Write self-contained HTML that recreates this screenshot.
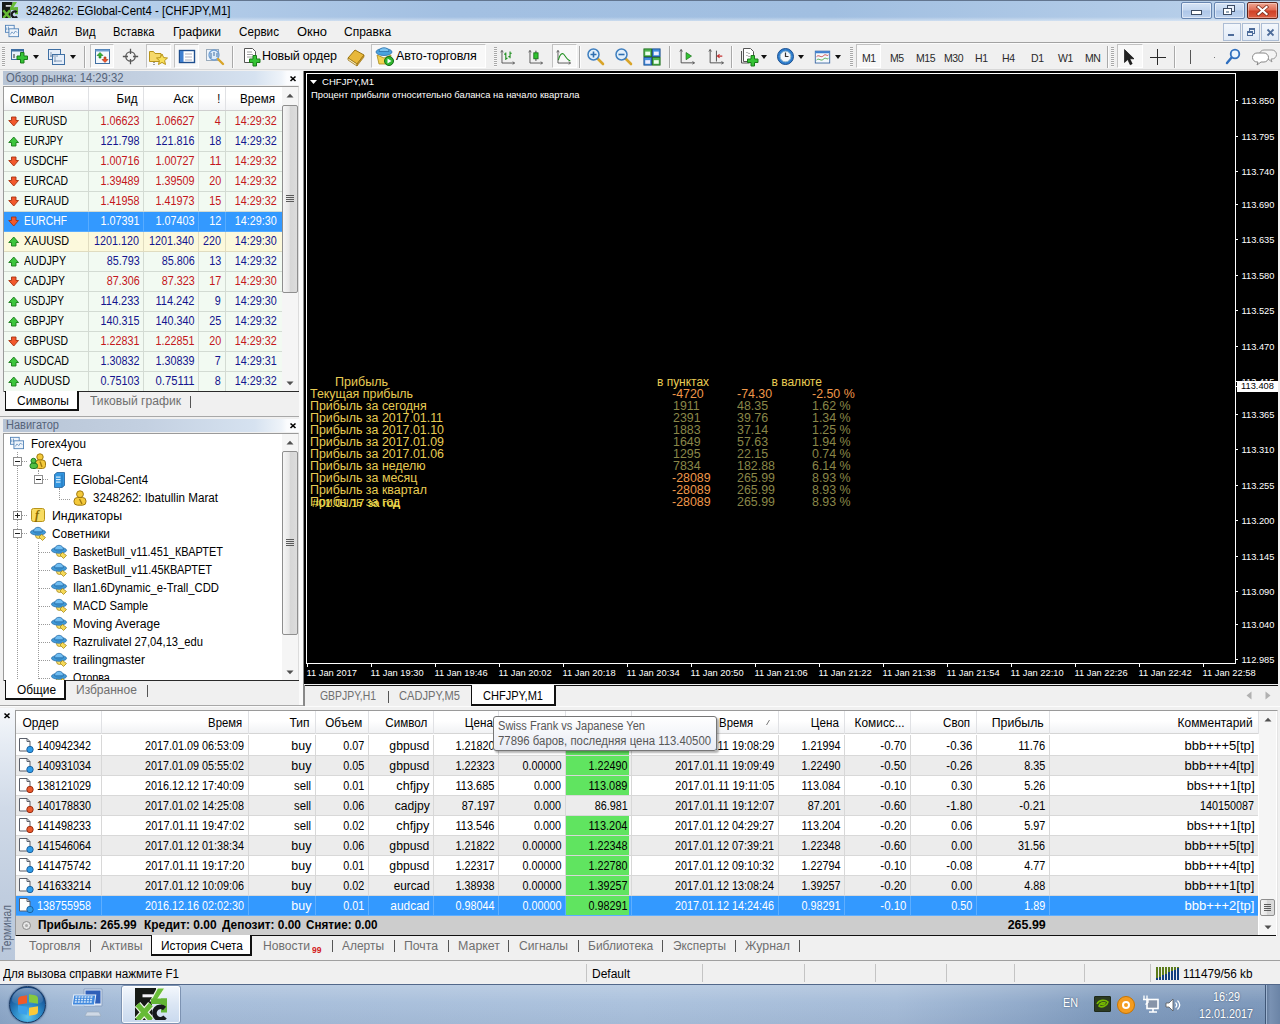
<!DOCTYPE html>
<html><head><meta charset="utf-8"><title>3248262: EGlobal-Cent4 - [CHFJPY,M1]</title>
<style>
*{box-sizing:border-box;margin:0;padding:0}
html,body{width:1280px;height:1024px;overflow:hidden}
body{position:relative;background:#f0f0f0;font-family:"Liberation Sans","DejaVu Sans",sans-serif;font-size:12px;color:#000;line-height:14px}
body *{position:absolute}
.t{white-space:nowrap;display:block}
svg text{position:static}
</style></head><body>

<div style="left:0px;top:0px;width:1280px;height:21px;background:linear-gradient(rgba(255,255,255,0),rgba(255,255,255,0) 80%,rgba(255,255,255,.45)),linear-gradient(90deg,#c6d9ee 0%,#b4cde9 12%,#a3c0e2 35%,#a1bfe1 65%,#b3cce8 90%,#bdd3eb 100%);border-top:1px solid #62758f"></div>
<svg style="left:2px;top:2px" width="16" height="16" viewBox="0 0 32 32"><rect x="0" y="0" width="21" height="16" fill="#161a16"/><rect x="7.500" y="6.300" width="11" height="3" fill="#f4f4f8"/><path d="M22.500 0h7.500L21.500 13h-6z" fill="#6abf3a"/><path d="M16 10.500h16v5.500H16z" fill="#62b535"/><path d="M26 10.500h6v14h-6z" fill="#62b535"/><rect x="0" y="16" width="17" height="16" fill="#161a16"/><path d="M2.500 16.500L16 32M16 16.500L2.500 32" stroke="#66bb36" stroke-width="5"/><path d="M29.500 20.500a6 6.200 0 1 0 .5 8.500" fill="none" stroke="#16181c" stroke-width="4.600"/></svg>
<span class="t" style="left:25.5px;transform-origin:0 50%;top:3.5px;transform:scaleX(0.953);">3248262: EGlobal-Cent4 - [CHFJPY,M1]</span>
<div style="left:1181px;top:2px;width:31px;height:17px;background:linear-gradient(#d6e4f6,#c3d6ef 48%,#adc6e8 52%,#bed2ee);border:1px solid #6785b0;border-radius:2px;box-shadow:inset 0 0 0 1px rgba(255,255,255,.5);"></div>
<div style="left:1191px;top:10px;width:11px;height:5px;background:#fff;border:1px solid #3d4c63"></div>
<div style="left:1214px;top:2px;width:31px;height:17px;background:linear-gradient(#d6e4f6,#c3d6ef 48%,#adc6e8 52%,#bed2ee);border:1px solid #6785b0;border-radius:2px;box-shadow:inset 0 0 0 1px rgba(255,255,255,.5);"></div>
<div style="left:1227px;top:5px;width:8px;height:7px;background:#e8f0fa;border:1px solid #3d4c63"></div>
<div style="left:1223px;top:8px;width:9px;height:7px;background:#fff;border:1px solid #3d4c63"></div>
<div style="left:1226px;top:11px;width:3px;height:2px;background:#9ab;"></div>
<div style="left:1247px;top:2px;width:31px;height:17px;background:linear-gradient(#f0a893,#e06a52 48%,#cf3f26 52%,#dd5e42);border:1px solid #5e241a;border-radius:2px;box-shadow:inset 0 0 0 1px rgba(255,255,255,.35);"></div>
<svg style="left:1256px;top:5px" width="13" height="11" viewBox="0 0 13 11"><path d="M2.500 2l8 7M10.500 2l-8 7" stroke="#7a2a1a" stroke-width="3.600" stroke-linecap="square"/><path d="M2.500 2l8 7M10.500 2l-8 7" stroke="#fff" stroke-width="2.200" stroke-linecap="square"/></svg>
<div style="left:0px;top:21px;width:1280px;height:22px;background:#f0f0f0;"></div>
<div style="left:0px;top:42px;width:1280px;height:1px;background:#a2a2a2;"></div>
<svg style="left:4px;top:24px" width="16" height="14" viewBox="0 0 18 16"><rect x="1.500" y="1.500" width="10" height="8" fill="#eef4fb" stroke="#4d7fb5"/><rect x="5.500" y="5.500" width="11" height="9" fill="#eef4fb" stroke="#4d7fb5"/><path d="M7 12l2-3 2 2 2-3 2 2" fill="none" stroke="#4d7fb5" stroke-width=".8"/><path d="M3 4v3M5 3v4" stroke="#4d7fb5" stroke-width=".8"/></svg>
<span class="t" style="left:28px;transform-origin:0 50%;top:25px;">Файл</span>
<span class="t" style="left:75px;transform-origin:0 50%;top:25px;transform:scaleX(0.944);">Вид</span>
<span class="t" style="left:113px;transform-origin:0 50%;top:25px;transform:scaleX(0.930);">Вставка</span>
<span class="t" style="left:173px;transform-origin:0 50%;top:25px;transform:scaleX(1.006);">Графики</span>
<span class="t" style="left:239px;transform-origin:0 50%;top:25px;transform:scaleX(0.973);">Сервис</span>
<span class="t" style="left:297px;transform-origin:0 50%;top:25px;transform:scaleX(1.076);">Окно</span>
<span class="t" style="left:344px;transform-origin:0 50%;top:25px;">Справка</span>
<div style="left:1223px;top:23px;width:18px;height:18px;background:linear-gradient(#f3f7fc,#e1eaf6);border:1px solid #adbdd4"></div>
<div style="left:1242px;top:23px;width:18px;height:18px;background:linear-gradient(#f3f7fc,#e1eaf6);border:1px solid #adbdd4"></div>
<div style="left:1261px;top:23px;width:18px;height:18px;background:linear-gradient(#f3f7fc,#e1eaf6);border:1px solid #adbdd4"></div>
<div style="left:1228px;top:34px;width:6px;height:2px;background:#4d6c9a;"></div>
<div style="left:1249px;top:28px;width:6px;height:6px;border:1px solid #4d6c9a;border-top-width:2px"></div>
<div style="left:1247px;top:31px;width:6px;height:5px;background:#eaf0f8;border:1px solid #4d6c9a;border-top-width:2px"></div>
<svg style="left:1266px;top:28px" width="9" height="9" viewBox="0 0 9 9"><path d="M1.500 1.500l6 6M7.500 1.500l-6 6" stroke="#4d6c9a" stroke-width="1.800"/></svg>
<div style="left:0px;top:43px;width:1280px;height:27px;background:#f0f0f0;border-top:1px solid #fbfbfb;border-bottom:1px solid #d8d8d8"></div>
<div style="left:0;top:43px;width:1280px;height:27px"><div style="left:2px;top:4px;width:3px;height:20px;background:repeating-linear-gradient(#a8a8a8 0 1px,#f8f8f8 1px 2px)"></div>
<svg style="left:10px;top:3px" width="22" height="20" viewBox="0 0 22 20"><rect x="1.5" y="3.5" width="12" height="10" fill="#eaf2fb" stroke="#3f6fa3"/><rect x="1.5" y="3.5" width="12" height="2" fill="#3f6fa3"/><path d="M4 8v4M3 9h2M3 11h2" stroke="#555" stroke-width=".8" fill="none"/><path d="M10.5 6.5h3.5v3.5h3.5v3.5h-3.5v3.5h-3.5v-3.5h-3.5v-3.5h3.500z" fill="#35c435" stroke="#1a7a1a"/></svg>
<div style="left:33px;top:12px;width:0;height:0;border-left:3px solid transparent;border-right:3px solid transparent;border-top:4px solid #111"></div>
<svg style="left:47px;top:4px" width="20" height="20" viewBox="0 0 20 20"><rect x="1.500" y="2.500" width="12" height="10" fill="#e6eef9" stroke="#3f6fa3"/><rect x="5.500" y="7.500" width="12" height="10" fill="#e6eef9" stroke="#3f6fa3"/><path d="M4 5v5M8 10v5M3 9h8M7 14h8" stroke="#6a86a8" stroke-width=".8" fill="none"/></svg>
<div style="left:70px;top:12px;width:0;height:0;border-left:3px solid transparent;border-right:3px solid transparent;border-top:4px solid #111"></div>
<div style="left:84px;top:3px;width:1px;height:22px;background:#a9a9a9"></div><div style="left:85px;top:3px;width:1px;height:22px;background:#fcfcfc"></div>
<div style="left:90px;top:1px;width:24px;height:24px;background:#f8f8f8;border:1px solid #c2c2c2;border-right-color:#fff;border-bottom-color:#fff"></div>
<svg style="left:94px;top:5px" width="17" height="17" viewBox="0 0 17 17"><rect x="1.500" y="1.500" width="14" height="14" fill="#f4f8fd" stroke="#3f6fa3"/><rect x="1.500" y="1.500" width="14" height="2" fill="#6f9fd3"/><path d="M6 4.500l3 3h-2v2.500h-2v-2.500h-2z" fill="#35b435" stroke="#1a7a1a" stroke-width=".6"/><path d="M11 14.500l3-3h-2v-2.500h-2v2.500h-2z" fill="#f0522a" stroke="#a0300f" stroke-width=".6"/></svg>
<svg style="left:122px;top:5px" width="17" height="17" viewBox="0 0 20 20"><circle cx="10" cy="10" r="5.500" fill="none" stroke="#555" stroke-width="1.500"/><path d="M10 1v6M10 13v6M1 10h6M13 10h6" stroke="#555" stroke-width="1.500"/></svg>
<div style="left:146px;top:1px;width:25px;height:24px;background:#f8f8f8;border:1px solid #c2c2c2;border-right-color:#fff;border-bottom-color:#fff"></div>
<svg style="left:148px;top:4px" width="22" height="20" viewBox="0 0 22 20"><path d="M1.500 4.500h4l1.500 2h6v8h-11.500z" fill="#f6d96b" stroke="#b8941a"/><path d="M14 7l1.700 3.600 3.800.4-2.900 2.600.9 3.900-3.500-2.100-3.500 2.100.9-3.900-2.900-2.600 3.800-.4z" fill="#f8e05a" stroke="#b8941a"/><path d="M6 15v4" stroke="#444" stroke-dasharray="1 1"/></svg>
<div style="left:174px;top:1px;width:25px;height:24px;background:#f8f8f8;border:1px solid #c2c2c2;border-right-color:#fff;border-bottom-color:#fff"></div>
<svg style="left:178px;top:6px" width="18" height="16" viewBox="0 0 18 16"><rect x="1.500" y="1.500" width="15" height="12" fill="#fff" stroke="#1f4f8f" stroke-width="1.400"/><rect x="2" y="2" width="3.500" height="11" fill="#3f7fcf"/><path d="M7 5h7M7 8h7M7 11h7" stroke="#99a" stroke-width=".8"/></svg>
<svg style="left:205px;top:4px" width="20" height="20" viewBox="0 0 20 20"><rect x="1.500" y="2.500" width="12" height="11" fill="#eef4fb" stroke="#9ab"/><circle cx="9" cy="8" r="5" fill="#d6e8f8" fill-opacity=".7" stroke="#6f9fd3" stroke-width="1.300"/><path d="M6 6v5M9 5v4M12 6v4" stroke="#3f6fa3"/><path d="M13 12l5 5" stroke="#d9a52a" stroke-width="2.400" stroke-linecap="round"/></svg>
<div style="left:232px;top:3px;width:1px;height:22px;background:#a9a9a9"></div><div style="left:233px;top:3px;width:1px;height:22px;background:#fcfcfc"></div>
<svg style="left:242px;top:4px" width="20" height="20" viewBox="0 0 20 20"><path d="M2.500 1.500h8l3 3v11h-11z" fill="#fff" stroke="#555"/><path d="M5 5h5M5 7.500h6M5 10h6" stroke="#888" stroke-width=".8"/><path d="M11 8.500h3.500v3.500h3.500v3.500h-3.500v3.500h-3.500v-3.500h-3.500v-3.500h3.500z" fill="#35c435" stroke="#1a7a1a"/></svg>
<span class="t" style="left:262px;top:6px;font-size:12.5px;letter-spacing:-.2px">Новый ордер</span>
<svg style="left:346px;top:4px" width="20" height="20" viewBox="0 0 20 20"><path d="M2 11l7-8 9 5-7 9z" fill="#e8b83a" stroke="#9a7410"/><path d="M2 11l0 2 9 6 0-2z" fill="#fff3c8" stroke="#9a7410" stroke-width=".8"/><path d="M11 17l7-9v2l-7 9z" fill="#c8962a" stroke="#9a7410" stroke-width=".6"/></svg>
<div style="left:371px;top:1px;width:115px;height:24px;background:#f8f8f8;border:1px solid #c2c2c2;border-right-color:#fff;border-bottom-color:#fff"></div>
<svg style="left:375px;top:3px" width="20" height="21" viewBox="0 0 20 21"><ellipse cx="9" cy="6" rx="8" ry="3.500" fill="#4aa3df" stroke="#2a6fa8" stroke-width=".8"/><path d="M4 5.500C4 0.500 14 0.500 14 5.500Z" fill="#7cc4f2" stroke="#2a6fa8" stroke-width=".8"/><path d="M2 9l7 3 7-3-2 9h-10z" fill="#f2d250" stroke="#a88a1a" stroke-width=".8"/><circle cx="14" cy="15" r="4.500" fill="#2fb52f" stroke="#176f17"/><path d="M12.500 12.500v5l4-2.500z" fill="#fff"/></svg>
<span class="t" style="left:396px;top:6px;font-size:12.5px;letter-spacing:-.15px">Авто-торговля</span>
<div style="left:494px;top:4px;width:3px;height:20px;background:repeating-linear-gradient(#a8a8a8 0 1px,#f8f8f8 1px 2px)"></div>
<svg style="left:499px;top:6px" width="17" height="17" viewBox="0 0 20 20"><path d="M3.500 2v14.500H18" stroke="#444" fill="none"/><path d="M2 4l1.500-2.500L5 4M16 15l2.500 1.500L16 18" stroke="#444" fill="none" stroke-width=".8"/><path d="M8 4v9M6 6h2M8 11h2M13 3v8M11 9h2M13 5h2" stroke="#1f8f1f" stroke-width="1.300" fill="none"/></svg>
<svg style="left:527px;top:6px" width="17" height="17" viewBox="0 0 20 20"><path d="M3.500 2v14.500H18" stroke="#444" fill="none"/><path d="M2 4l1.500-2.500L5 4M16 15l2.500 1.500L16 18" stroke="#444" fill="none" stroke-width=".8"/><path d="M10.500 2v12" stroke="#222"/><rect x="8" y="4.500" width="5" height="7" fill="#2fc42f" stroke="#176f17"/></svg>
<div style="left:552px;top:1px;width:25px;height:24px;background:#f8f8f8;border:1px solid #c2c2c2;border-right-color:#fff;border-bottom-color:#fff"></div>
<svg style="left:555px;top:6px" width="17" height="17" viewBox="0 0 20 20"><path d="M3.500 2v14.500H18" stroke="#444" fill="none"/><path d="M2 4l1.500-2.500L5 4M16 15l2.500 1.500L16 18" stroke="#444" fill="none" stroke-width=".8"/><path d="M4 13C6 5 9 4 11 7s4 6 7 7" stroke="#1f8f1f" stroke-width="1.200" fill="none"/></svg>
<div style="left:579px;top:3px;width:1px;height:22px;background:#a9a9a9"></div><div style="left:580px;top:3px;width:1px;height:22px;background:#fcfcfc"></div>
<svg style="left:586px;top:4px" width="20" height="20" viewBox="0 0 20 20"><path d="M11 11l6 6" stroke="#d9a52a" stroke-width="2.600" stroke-linecap="round"/><circle cx="7.500" cy="7.500" r="5.500" fill="#e2f0fb" stroke="#3f7fbf" stroke-width="1.500"/><path d="M4.500 7.500h6M7.500 4.500v6" stroke="#2f6faf" stroke-width="1.600"/></svg>
<svg style="left:614px;top:4px" width="20" height="20" viewBox="0 0 20 20"><path d="M11 11l6 6" stroke="#d9a52a" stroke-width="2.600" stroke-linecap="round"/><circle cx="7.500" cy="7.500" r="5.500" fill="#e2f0fb" stroke="#3f7fbf" stroke-width="1.500"/><path d="M4.500 7.500h6" stroke="#2f6faf" stroke-width="1.600"/></svg>
<svg style="left:643px;top:5px" width="18" height="18" viewBox="0 0 20 20"><rect x="1" y="1" width="8.5" height="8.5" fill="#4fb34f" stroke="#1f6f1f"/><rect x="10.5" y="1" width="8.5" height="8.5" fill="#3f8fdf" stroke="#1f4f8f"/><rect x="1" y="10.5" width="8.5" height="8.5" fill="#3f8fdf" stroke="#1f4f8f"/><rect x="10.5" y="10.5" width="8.5" height="8.5" fill="#4fb34f" stroke="#1f6f1f"/><rect x="2.5" y="4" width="5.5" height="4" fill="#efe"/><rect x="12" y="4" width="5.5" height="4" fill="#eef"/><rect x="2.5" y="13.5" width="5.5" height="4" fill="#eef"/><rect x="12" y="13.5" width="5.5" height="4" fill="#efe"/></svg>
<div style="left:669px;top:3px;width:1px;height:22px;background:#a9a9a9"></div><div style="left:670px;top:3px;width:1px;height:22px;background:#fcfcfc"></div>
<svg style="left:678px;top:5px" width="18" height="18" viewBox="0 0 20 20"><path d="M3.500 2v14.500H18" stroke="#444" fill="none"/><path d="M2 4l1.500-2.500L5 4M16 15l2.500 1.500L16 18" stroke="#444" fill="none" stroke-width=".8"/><path d="M9 5v8l6-4z" fill="#2fc42f" stroke="#176f17" stroke-width=".8"/></svg>
<svg style="left:707px;top:5px" width="18" height="18" viewBox="0 0 20 20"><path d="M3.500 2v14.500H18" stroke="#444" fill="none"/><path d="M2 4l1.500-2.500L5 4M16 15l2.500 1.500L16 18" stroke="#444" fill="none" stroke-width=".8"/><path d="M10.500 3v12" stroke="#444"/><path d="M17 9h-5M14 7l-2.500 2 2.500 2" stroke="#c42f2f" fill="none" stroke-width="1.200"/></svg>
<div style="left:731px;top:3px;width:1px;height:22px;background:#a9a9a9"></div><div style="left:732px;top:3px;width:1px;height:22px;background:#fcfcfc"></div>
<svg style="left:739px;top:3px" width="22" height="22" viewBox="0 0 22 22"><path d="M4.500 2.500h7l3 3v10h-10z" fill="#fff" stroke="#555"/><path d="M2.500 5v12h8" fill="none" stroke="#555"/><path d="M7 7c1.500-2 2.500 2 4 0M7 10c1.500-2 2.500 2 4 0" stroke="#888" fill="none" stroke-width=".8"/><path d="M12 9.500h3.500v3.500h3.500v3.500h-3.500v3.500h-3.500v-3.500h-3.500v-3.500h3.500z" fill="#35c435" stroke="#1a7a1a"/></svg>
<div style="left:761px;top:12px;width:0;height:0;border-left:3px solid transparent;border-right:3px solid transparent;border-top:4px solid #111"></div>
<svg style="left:776px;top:4px" width="20" height="20" viewBox="0 0 20 20"><circle cx="9.500" cy="9.500" r="8" fill="#2f7fd0" stroke="#1a4f8f"/><circle cx="9.500" cy="9.500" r="5.300" fill="#f4f8fc" stroke="#9bc"/><path d="M9.500 5.500v4h3" stroke="#333" fill="none" stroke-width="1.200"/></svg>
<div style="left:798px;top:12px;width:0;height:0;border-left:3px solid transparent;border-right:3px solid transparent;border-top:4px solid #111"></div>
<svg style="left:814px;top:6px" width="17" height="17" viewBox="0 0 20 20"><rect x="1.500" y="2.500" width="17" height="14" fill="#f4f8fd" stroke="#2f5f9f"/><rect x="1.500" y="2.500" width="17" height="2.500" fill="#3f7fcf"/><path d="M3 9c3-3 5 2 8-1s4 1 6-1" stroke="#c42f2f" fill="none"/><path d="M3 13c3-3 5 2 8-1s4 1 6-1" stroke="#2f9f2f" fill="none"/></svg>
<div style="left:835px;top:12px;width:0;height:0;border-left:3px solid transparent;border-right:3px solid transparent;border-top:4px solid #111"></div>
<div style="left:850px;top:4px;width:3px;height:20px;background:repeating-linear-gradient(#a8a8a8 0 1px,#f8f8f8 1px 2px)"></div>
<div style="left:856px;top:1px;width:25px;height:24px;background:#f8f8f8;border:1px solid #c2c2c2;border-right-color:#fff;border-bottom-color:#fff"></div>
<span class="t" style="left:862px;top:7.5px;font-size:10.5px;color:#2a2a2a;letter-spacing:-.45px">M1</span>
<span class="t" style="left:890px;top:7.5px;font-size:10.5px;color:#2a2a2a;letter-spacing:-.45px">M5</span>
<span class="t" style="left:916px;top:7.5px;font-size:10.5px;color:#2a2a2a;letter-spacing:-.45px">M15</span>
<span class="t" style="left:944px;top:7.5px;font-size:10.5px;color:#2a2a2a;letter-spacing:-.45px">M30</span>
<span class="t" style="left:975px;top:7.5px;font-size:10.5px;color:#2a2a2a;letter-spacing:-.45px">H1</span>
<span class="t" style="left:1002px;top:7.5px;font-size:10.5px;color:#2a2a2a;letter-spacing:-.45px">H4</span>
<span class="t" style="left:1031px;top:7.5px;font-size:10.5px;color:#2a2a2a;letter-spacing:-.45px">D1</span>
<span class="t" style="left:1058px;top:7.5px;font-size:10.5px;color:#2a2a2a;letter-spacing:-.45px">W1</span>
<span class="t" style="left:1085px;top:7.5px;font-size:10.5px;color:#2a2a2a;letter-spacing:-.45px">MN</span>
<div style="left:1107px;top:3px;width:1px;height:22px;background:#a9a9a9"></div><div style="left:1108px;top:3px;width:1px;height:22px;background:#fcfcfc"></div>
<div style="left:1111px;top:4px;width:3px;height:20px;background:repeating-linear-gradient(#a8a8a8 0 1px,#f8f8f8 1px 2px)"></div>
<div style="left:1117px;top:1px;width:26px;height:24px;background:#f8f8f8;border:1px solid #c2c2c2;border-right-color:#fff;border-bottom-color:#fff"></div>
<svg style="left:1122px;top:5px" width="14" height="18" viewBox="0 0 14 18"><path d="M2.500 1.500v13l3.300-3 2.400 5.300 2-1-2.400-5h4.200z" fill="#222" stroke="#000" stroke-width=".6"/></svg>
<svg style="left:1149px;top:5px" width="18" height="18" viewBox="0 0 18 18"><path d="M8.5 1v16M1 9.5h16" stroke="#2a2a2a" stroke-width="1"/></svg>
<div style="left:1174px;top:3px;width:1px;height:22px;background:#a9a9a9"></div><div style="left:1175px;top:3px;width:1px;height:22px;background:#fcfcfc"></div>
<div style="left:1190px;top:7px;width:1px;height:14px;background:#555"></div>
<div style="left:1214px;top:14px;width:1px;height:1px;background:#777"></div>
<svg style="left:1224px;top:4px" width="18" height="20" viewBox="0 0 18 20"><path d="M3 16l5-6" stroke="#2f6fbf" stroke-width="2.400" stroke-linecap="round"/><circle cx="11" cy="7" r="4.300" fill="#eaf4fd" stroke="#2f6fbf" stroke-width="1.800"/></svg>
<svg style="left:1252px;top:5px" width="26" height="20" viewBox="0 0 26 20"><path d="M12 2h8a4 4 0 0 1 0 9h-1l1 3-4-3h-4a4 4 0 0 1 0-9z" fill="#f4f4f4" stroke="#999"/><path d="M5 5h7a4 4 0 0 1 0 9h-3l-4 3 1-3h-1a4 4 0 0 1 0-9z" fill="#fff" stroke="#888"/></svg></div>
<div style="left:3px;top:71px;width:296px;height:14px;background:linear-gradient(90deg,#b7c4d5,#c3d0e1 48%,#d6e2f0 85%,#eef3f9 94%,#fbfcfe 96%);"></div>
<span class="t" style="left:6px;transform-origin:0 50%;top:71px;color:#56647a;transform:scaleX(0.936);">Обзор рынка: 14:29:32</span>
<svg style="left:289px;top:75px" width="8" height="8" viewBox="0 0 8 8"><path d="M1.500 1.500l5 4.500M6.500 1.500l-5 4.500" stroke="#000" stroke-width="1.600"/></svg>
<div style="left:3px;top:86px;width:296px;height:306px;background:#fff;border:1px solid #9a9a9a;border-bottom:none;border-right-color:#dcdcdc"></div>
<div style="left:4px;top:87px;width:278px;height:24px;background:linear-gradient(#fff,#fff 45%,#f3f4f6);border-bottom:1px solid #cfcfcf"></div>
<div style="left:88px;top:87px;width:1px;height:23px;background:#e0e1e4;"></div>
<div style="left:143px;top:87px;width:1px;height:23px;background:#e0e1e4;"></div>
<div style="left:198px;top:87px;width:1px;height:23px;background:#e0e1e4;"></div>
<div style="left:225px;top:87px;width:1px;height:23px;background:#e0e1e4;"></div>
<span class="t" style="left:10px;transform-origin:0 50%;top:92px;transform:scaleX(1.017);">Символ</span>
<span class="t" style="right:1142px;transform-origin:100% 50%;top:92px;transform:scaleX(0.973);">Бид</span>
<span class="t" style="right:1087px;transform-origin:100% 50%;top:92px;transform:scaleX(1.039);">Аск</span>
<span class="t" style="right:1060px;transform-origin:100% 50%;top:92px;transform:scaleX(0.900);">!</span>
<span class="t" style="right:1005px;transform-origin:100% 50%;top:92px;transform:scaleX(0.970);">Время</span>
<div style="left:4px;top:111px;width:278px;height:21px;background:#f2faf2;border-bottom:1px solid #d3dbd3"></div>
<div style="left:88px;top:111px;width:1px;height:21px;background:#d3dbd3;"></div>
<div style="left:143px;top:111px;width:1px;height:21px;background:#d3dbd3;"></div>
<div style="left:198px;top:111px;width:1px;height:21px;background:#d3dbd3;"></div>
<div style="left:225px;top:111px;width:1px;height:21px;background:#d3dbd3;"></div>
<svg style="left:8px;top:115.5px" width="12" height="11" viewBox="0 0 12 11"><path d="M3.500 1h4.500v3.500h2.500L5.750 10 .750 4.500H3.500z" fill="#f2582c" stroke="#a83210" stroke-width=".9"/></svg>
<span class="t" style="left:24px;transform-origin:0 50%;top:113.5px;color:#000;transform:scaleX(0.849);">EURUSD</span>
<span class="t" style="right:1140.5px;transform-origin:100% 50%;top:113.5px;color:#c4161c;transform:scaleX(0.899);">1.06623</span>
<span class="t" style="right:1085.5px;transform-origin:100% 50%;top:113.5px;color:#c4161c;transform:scaleX(0.899);">1.06627</span>
<span class="t" style="right:1059px;transform-origin:100% 50%;top:113.5px;color:#c4161c;transform:scaleX(0.899);">4</span>
<span class="t" style="right:1003px;transform-origin:100% 50%;top:113.5px;color:#c4161c;transform:scaleX(0.899);">14:29:32</span>
<div style="left:4px;top:132px;width:278px;height:20px;background:#f2faf2;border-bottom:1px solid #d3dbd3"></div>
<div style="left:88px;top:132px;width:1px;height:20px;background:#d3dbd3;"></div>
<div style="left:143px;top:132px;width:1px;height:20px;background:#d3dbd3;"></div>
<div style="left:198px;top:132px;width:1px;height:20px;background:#d3dbd3;"></div>
<div style="left:225px;top:132px;width:1px;height:20px;background:#d3dbd3;"></div>
<svg style="left:8px;top:135.5px" width="12" height="11" viewBox="0 0 12 11"><path d="M3.500 10h4.500v-3.500h2.500L5.750 1 .750 6.500H3.500z" fill="#3dc63d" stroke="#1a7a1a" stroke-width=".9"/></svg>
<span class="t" style="left:24px;transform-origin:0 50%;top:133.5px;color:#000;transform:scaleX(0.824);">EURJPY</span>
<span class="t" style="right:1140.5px;transform-origin:100% 50%;top:133.5px;color:#14148e;transform:scaleX(0.899);">121.798</span>
<span class="t" style="right:1085.5px;transform-origin:100% 50%;top:133.5px;color:#14148e;transform:scaleX(0.899);">121.816</span>
<span class="t" style="right:1059px;transform-origin:100% 50%;top:133.5px;color:#14148e;transform:scaleX(0.899);">18</span>
<span class="t" style="right:1003px;transform-origin:100% 50%;top:133.5px;color:#14148e;transform:scaleX(0.899);">14:29:32</span>
<div style="left:4px;top:152px;width:278px;height:20px;background:#f2faf2;border-bottom:1px solid #d3dbd3"></div>
<div style="left:88px;top:152px;width:1px;height:20px;background:#d3dbd3;"></div>
<div style="left:143px;top:152px;width:1px;height:20px;background:#d3dbd3;"></div>
<div style="left:198px;top:152px;width:1px;height:20px;background:#d3dbd3;"></div>
<div style="left:225px;top:152px;width:1px;height:20px;background:#d3dbd3;"></div>
<svg style="left:8px;top:155.5px" width="12" height="11" viewBox="0 0 12 11"><path d="M3.500 1h4.500v3.500h2.500L5.750 10 .750 4.500H3.500z" fill="#f2582c" stroke="#a83210" stroke-width=".9"/></svg>
<span class="t" style="left:24px;transform-origin:0 50%;top:153.5px;color:#000;transform:scaleX(0.880);">USDCHF</span>
<span class="t" style="right:1140.5px;transform-origin:100% 50%;top:153.5px;color:#c4161c;transform:scaleX(0.899);">1.00716</span>
<span class="t" style="right:1085.5px;transform-origin:100% 50%;top:153.5px;color:#c4161c;transform:scaleX(0.899);">1.00727</span>
<span class="t" style="right:1059px;transform-origin:100% 50%;top:153.5px;color:#c4161c;transform:scaleX(0.963);">11</span>
<span class="t" style="right:1003px;transform-origin:100% 50%;top:153.5px;color:#c4161c;transform:scaleX(0.899);">14:29:32</span>
<div style="left:4px;top:172px;width:278px;height:20px;background:#f2faf2;border-bottom:1px solid #d3dbd3"></div>
<div style="left:88px;top:172px;width:1px;height:20px;background:#d3dbd3;"></div>
<div style="left:143px;top:172px;width:1px;height:20px;background:#d3dbd3;"></div>
<div style="left:198px;top:172px;width:1px;height:20px;background:#d3dbd3;"></div>
<div style="left:225px;top:172px;width:1px;height:20px;background:#d3dbd3;"></div>
<svg style="left:8px;top:175.5px" width="12" height="11" viewBox="0 0 12 11"><path d="M3.500 1h4.500v3.500h2.500L5.750 10 .750 4.500H3.500z" fill="#f2582c" stroke="#a83210" stroke-width=".9"/></svg>
<span class="t" style="left:24px;transform-origin:0 50%;top:173.5px;color:#000;transform:scaleX(0.868);">EURCAD</span>
<span class="t" style="right:1140.5px;transform-origin:100% 50%;top:173.5px;color:#c4161c;transform:scaleX(0.899);">1.39489</span>
<span class="t" style="right:1085.5px;transform-origin:100% 50%;top:173.5px;color:#c4161c;transform:scaleX(0.899);">1.39509</span>
<span class="t" style="right:1059px;transform-origin:100% 50%;top:173.5px;color:#c4161c;transform:scaleX(0.899);">20</span>
<span class="t" style="right:1003px;transform-origin:100% 50%;top:173.5px;color:#c4161c;transform:scaleX(0.899);">14:29:32</span>
<div style="left:4px;top:192px;width:278px;height:20px;background:#f2faf2;border-bottom:1px solid #d3dbd3"></div>
<div style="left:88px;top:192px;width:1px;height:20px;background:#d3dbd3;"></div>
<div style="left:143px;top:192px;width:1px;height:20px;background:#d3dbd3;"></div>
<div style="left:198px;top:192px;width:1px;height:20px;background:#d3dbd3;"></div>
<div style="left:225px;top:192px;width:1px;height:20px;background:#d3dbd3;"></div>
<svg style="left:8px;top:195.5px" width="12" height="11" viewBox="0 0 12 11"><path d="M3.500 1h4.500v3.500h2.500L5.750 10 .750 4.500H3.500z" fill="#f2582c" stroke="#a83210" stroke-width=".9"/></svg>
<span class="t" style="left:24px;transform-origin:0 50%;top:193.5px;color:#000;transform:scaleX(0.888);">EURAUD</span>
<span class="t" style="right:1140.5px;transform-origin:100% 50%;top:193.5px;color:#c4161c;transform:scaleX(0.899);">1.41958</span>
<span class="t" style="right:1085.5px;transform-origin:100% 50%;top:193.5px;color:#c4161c;transform:scaleX(0.899);">1.41973</span>
<span class="t" style="right:1059px;transform-origin:100% 50%;top:193.5px;color:#c4161c;transform:scaleX(0.899);">15</span>
<span class="t" style="right:1003px;transform-origin:100% 50%;top:193.5px;color:#c4161c;transform:scaleX(0.899);">14:29:32</span>
<div style="left:4px;top:212px;width:278px;height:20px;background:#3399ff;border-bottom:1px solid #58acff"></div>
<div style="left:88px;top:212px;width:1px;height:20px;background:#58acff;"></div>
<div style="left:143px;top:212px;width:1px;height:20px;background:#58acff;"></div>
<div style="left:198px;top:212px;width:1px;height:20px;background:#58acff;"></div>
<div style="left:225px;top:212px;width:1px;height:20px;background:#58acff;"></div>
<svg style="left:8px;top:215.5px" width="12" height="11" viewBox="0 0 12 11"><path d="M3.500 1h4.500v3.500h2.500L5.750 10 .750 4.500H3.500z" fill="#f2582c" stroke="#a83210" stroke-width=".9"/></svg>
<span class="t" style="left:24px;transform-origin:0 50%;top:213.5px;color:#fff;transform:scaleX(0.860);">EURCHF</span>
<span class="t" style="right:1140.5px;transform-origin:100% 50%;top:213.5px;color:#fff;transform:scaleX(0.899);">1.07391</span>
<span class="t" style="right:1085.5px;transform-origin:100% 50%;top:213.5px;color:#fff;transform:scaleX(0.899);">1.07403</span>
<span class="t" style="right:1059px;transform-origin:100% 50%;top:213.5px;color:#fff;transform:scaleX(0.899);">12</span>
<span class="t" style="right:1003px;transform-origin:100% 50%;top:213.5px;color:#fff;transform:scaleX(0.899);">14:29:30</span>
<div style="left:4px;top:232px;width:278px;height:20px;background:#fcf9dc;border-bottom:1px solid #e0dcc0"></div>
<div style="left:88px;top:232px;width:1px;height:20px;background:#e0dcc0;"></div>
<div style="left:143px;top:232px;width:1px;height:20px;background:#e0dcc0;"></div>
<div style="left:198px;top:232px;width:1px;height:20px;background:#e0dcc0;"></div>
<div style="left:225px;top:232px;width:1px;height:20px;background:#e0dcc0;"></div>
<svg style="left:8px;top:235.5px" width="12" height="11" viewBox="0 0 12 11"><path d="M3.500 10h4.500v-3.500h2.500L5.750 1 .750 6.500H3.500z" fill="#3dc63d" stroke="#1a7a1a" stroke-width=".9"/></svg>
<span class="t" style="left:24px;transform-origin:0 50%;top:233.5px;color:#000;transform:scaleX(0.900);">XAUUSD</span>
<span class="t" style="right:1140.5px;transform-origin:100% 50%;top:233.5px;color:#14148e;transform:scaleX(0.899);">1201.120</span>
<span class="t" style="right:1085.5px;transform-origin:100% 50%;top:233.5px;color:#14148e;transform:scaleX(0.899);">1201.340</span>
<span class="t" style="right:1059px;transform-origin:100% 50%;top:233.5px;color:#14148e;transform:scaleX(0.899);">220</span>
<span class="t" style="right:1003px;transform-origin:100% 50%;top:233.5px;color:#14148e;transform:scaleX(0.899);">14:29:30</span>
<div style="left:4px;top:252px;width:278px;height:20px;background:#f2faf2;border-bottom:1px solid #d3dbd3"></div>
<div style="left:88px;top:252px;width:1px;height:20px;background:#d3dbd3;"></div>
<div style="left:143px;top:252px;width:1px;height:20px;background:#d3dbd3;"></div>
<div style="left:198px;top:252px;width:1px;height:20px;background:#d3dbd3;"></div>
<div style="left:225px;top:252px;width:1px;height:20px;background:#d3dbd3;"></div>
<svg style="left:8px;top:255.5px" width="12" height="11" viewBox="0 0 12 11"><path d="M3.500 10h4.500v-3.500h2.500L5.750 1 .750 6.500H3.500z" fill="#3dc63d" stroke="#1a7a1a" stroke-width=".9"/></svg>
<span class="t" style="left:24px;transform-origin:0 50%;top:253.5px;color:#000;transform:scaleX(0.887);">AUDJPY</span>
<span class="t" style="right:1140.5px;transform-origin:100% 50%;top:253.5px;color:#14148e;transform:scaleX(0.899);">85.793</span>
<span class="t" style="right:1085.5px;transform-origin:100% 50%;top:253.5px;color:#14148e;transform:scaleX(0.899);">85.806</span>
<span class="t" style="right:1059px;transform-origin:100% 50%;top:253.5px;color:#14148e;transform:scaleX(0.899);">13</span>
<span class="t" style="right:1003px;transform-origin:100% 50%;top:253.5px;color:#14148e;transform:scaleX(0.899);">14:29:32</span>
<div style="left:4px;top:272px;width:278px;height:20px;background:#f2faf2;border-bottom:1px solid #d3dbd3"></div>
<div style="left:88px;top:272px;width:1px;height:20px;background:#d3dbd3;"></div>
<div style="left:143px;top:272px;width:1px;height:20px;background:#d3dbd3;"></div>
<div style="left:198px;top:272px;width:1px;height:20px;background:#d3dbd3;"></div>
<div style="left:225px;top:272px;width:1px;height:20px;background:#d3dbd3;"></div>
<svg style="left:8px;top:275.5px" width="12" height="11" viewBox="0 0 12 11"><path d="M3.500 1h4.500v3.500h2.500L5.750 10 .750 4.500H3.500z" fill="#f2582c" stroke="#a83210" stroke-width=".9"/></svg>
<span class="t" style="left:24px;transform-origin:0 50%;top:273.5px;color:#000;transform:scaleX(0.866);">CADJPY</span>
<span class="t" style="right:1140.5px;transform-origin:100% 50%;top:273.5px;color:#c4161c;transform:scaleX(0.899);">87.306</span>
<span class="t" style="right:1085.5px;transform-origin:100% 50%;top:273.5px;color:#c4161c;transform:scaleX(0.899);">87.323</span>
<span class="t" style="right:1059px;transform-origin:100% 50%;top:273.5px;color:#c4161c;transform:scaleX(0.899);">17</span>
<span class="t" style="right:1003px;transform-origin:100% 50%;top:273.5px;color:#c4161c;transform:scaleX(0.899);">14:29:30</span>
<div style="left:4px;top:292px;width:278px;height:20px;background:#f2faf2;border-bottom:1px solid #d3dbd3"></div>
<div style="left:88px;top:292px;width:1px;height:20px;background:#d3dbd3;"></div>
<div style="left:143px;top:292px;width:1px;height:20px;background:#d3dbd3;"></div>
<div style="left:198px;top:292px;width:1px;height:20px;background:#d3dbd3;"></div>
<div style="left:225px;top:292px;width:1px;height:20px;background:#d3dbd3;"></div>
<svg style="left:8px;top:295.5px" width="12" height="11" viewBox="0 0 12 11"><path d="M3.500 10h4.500v-3.500h2.500L5.750 1 .750 6.500H3.500z" fill="#3dc63d" stroke="#1a7a1a" stroke-width=".9"/></svg>
<span class="t" style="left:24px;transform-origin:0 50%;top:293.5px;color:#000;transform:scaleX(0.845);">USDJPY</span>
<span class="t" style="right:1140.5px;transform-origin:100% 50%;top:293.5px;color:#14148e;transform:scaleX(0.918);">114.233</span>
<span class="t" style="right:1085.5px;transform-origin:100% 50%;top:293.5px;color:#14148e;transform:scaleX(0.918);">114.242</span>
<span class="t" style="right:1059px;transform-origin:100% 50%;top:293.5px;color:#14148e;transform:scaleX(0.899);">9</span>
<span class="t" style="right:1003px;transform-origin:100% 50%;top:293.5px;color:#14148e;transform:scaleX(0.899);">14:29:30</span>
<div style="left:4px;top:312px;width:278px;height:20px;background:#f2faf2;border-bottom:1px solid #d3dbd3"></div>
<div style="left:88px;top:312px;width:1px;height:20px;background:#d3dbd3;"></div>
<div style="left:143px;top:312px;width:1px;height:20px;background:#d3dbd3;"></div>
<div style="left:198px;top:312px;width:1px;height:20px;background:#d3dbd3;"></div>
<div style="left:225px;top:312px;width:1px;height:20px;background:#d3dbd3;"></div>
<svg style="left:8px;top:315.5px" width="12" height="11" viewBox="0 0 12 11"><path d="M3.500 10h4.500v-3.500h2.500L5.750 1 .750 6.500H3.500z" fill="#3dc63d" stroke="#1a7a1a" stroke-width=".9"/></svg>
<span class="t" style="left:24px;transform-origin:0 50%;top:313.5px;color:#000;transform:scaleX(0.845);">GBPJPY</span>
<span class="t" style="right:1140.5px;transform-origin:100% 50%;top:313.5px;color:#14148e;transform:scaleX(0.899);">140.315</span>
<span class="t" style="right:1085.5px;transform-origin:100% 50%;top:313.5px;color:#14148e;transform:scaleX(0.899);">140.340</span>
<span class="t" style="right:1059px;transform-origin:100% 50%;top:313.5px;color:#14148e;transform:scaleX(0.899);">25</span>
<span class="t" style="right:1003px;transform-origin:100% 50%;top:313.5px;color:#14148e;transform:scaleX(0.899);">14:29:32</span>
<div style="left:4px;top:332px;width:278px;height:20px;background:#f2faf2;border-bottom:1px solid #d3dbd3"></div>
<div style="left:88px;top:332px;width:1px;height:20px;background:#d3dbd3;"></div>
<div style="left:143px;top:332px;width:1px;height:20px;background:#d3dbd3;"></div>
<div style="left:198px;top:332px;width:1px;height:20px;background:#d3dbd3;"></div>
<div style="left:225px;top:332px;width:1px;height:20px;background:#d3dbd3;"></div>
<svg style="left:8px;top:335.5px" width="12" height="11" viewBox="0 0 12 11"><path d="M3.500 1h4.500v3.500h2.500L5.750 10 .750 4.500H3.500z" fill="#f2582c" stroke="#a83210" stroke-width=".9"/></svg>
<span class="t" style="left:24px;transform-origin:0 50%;top:333.5px;color:#000;transform:scaleX(0.868);">GBPUSD</span>
<span class="t" style="right:1140.5px;transform-origin:100% 50%;top:333.5px;color:#c4161c;transform:scaleX(0.899);">1.22831</span>
<span class="t" style="right:1085.5px;transform-origin:100% 50%;top:333.5px;color:#c4161c;transform:scaleX(0.899);">1.22851</span>
<span class="t" style="right:1059px;transform-origin:100% 50%;top:333.5px;color:#c4161c;transform:scaleX(0.899);">20</span>
<span class="t" style="right:1003px;transform-origin:100% 50%;top:333.5px;color:#c4161c;transform:scaleX(0.899);">14:29:32</span>
<div style="left:4px;top:352px;width:278px;height:20px;background:#f2faf2;border-bottom:1px solid #d3dbd3"></div>
<div style="left:88px;top:352px;width:1px;height:20px;background:#d3dbd3;"></div>
<div style="left:143px;top:352px;width:1px;height:20px;background:#d3dbd3;"></div>
<div style="left:198px;top:352px;width:1px;height:20px;background:#d3dbd3;"></div>
<div style="left:225px;top:352px;width:1px;height:20px;background:#d3dbd3;"></div>
<svg style="left:8px;top:355.5px" width="12" height="11" viewBox="0 0 12 11"><path d="M3.500 10h4.500v-3.500h2.500L5.750 1 .750 6.500H3.500z" fill="#3dc63d" stroke="#1a7a1a" stroke-width=".9"/></svg>
<span class="t" style="left:24px;transform-origin:0 50%;top:353.5px;color:#000;transform:scaleX(0.888);">USDCAD</span>
<span class="t" style="right:1140.5px;transform-origin:100% 50%;top:353.5px;color:#14148e;transform:scaleX(0.899);">1.30832</span>
<span class="t" style="right:1085.5px;transform-origin:100% 50%;top:353.5px;color:#14148e;transform:scaleX(0.899);">1.30839</span>
<span class="t" style="right:1059px;transform-origin:100% 50%;top:353.5px;color:#14148e;transform:scaleX(0.899);">7</span>
<span class="t" style="right:1003px;transform-origin:100% 50%;top:353.5px;color:#14148e;transform:scaleX(0.899);">14:29:31</span>
<div style="left:4px;top:372px;width:278px;height:20px;background:#f2faf2;border-bottom:1px solid #d3dbd3"></div>
<div style="left:88px;top:372px;width:1px;height:20px;background:#d3dbd3;"></div>
<div style="left:143px;top:372px;width:1px;height:20px;background:#d3dbd3;"></div>
<div style="left:198px;top:372px;width:1px;height:20px;background:#d3dbd3;"></div>
<div style="left:225px;top:372px;width:1px;height:20px;background:#d3dbd3;"></div>
<svg style="left:8px;top:375.5px" width="12" height="11" viewBox="0 0 12 11"><path d="M3.500 10h4.500v-3.500h2.500L5.750 1 .750 6.500H3.500z" fill="#3dc63d" stroke="#1a7a1a" stroke-width=".9"/></svg>
<span class="t" style="left:24px;transform-origin:0 50%;top:373.5px;color:#000;transform:scaleX(0.908);">AUDUSD</span>
<span class="t" style="right:1140.5px;transform-origin:100% 50%;top:373.5px;color:#14148e;transform:scaleX(0.899);">0.75103</span>
<span class="t" style="right:1085.5px;transform-origin:100% 50%;top:373.5px;color:#14148e;transform:scaleX(0.938);">0.75111</span>
<span class="t" style="right:1059px;transform-origin:100% 50%;top:373.5px;color:#14148e;transform:scaleX(0.899);">8</span>
<span class="t" style="right:1003px;transform-origin:100% 50%;top:373.5px;color:#14148e;transform:scaleX(0.899);">14:29:32</span>
<div style="left:282px;top:87px;width:16px;height:304px;background:#f5f5f5;"></div>
<div style="left:282px;top:105px;width:16px;height:188px;background:linear-gradient(90deg,#f5f5f5,#e6e6e6 45%,#d6d6d6 50%,#dcdcdc);border:1px solid #8e8e8e;border-radius:2px"></div>
<svg style="left:286px;top:93px" width="8" height="5" viewBox="0 0 8 5"><path d="M.500 4.500L4 .800 7.500 4.500z" fill="#505050"/></svg>
<svg style="left:286px;top:381px" width="8" height="5" viewBox="0 0 8 5"><path d="M.500 .500L4 4.200 7.500 .500z" fill="#505050"/></svg>
<div style="left:286px;top:195px;width:8px;height:1px;background:#5a5a5a;"></div>
<div style="left:286px;top:197px;width:8px;height:1px;background:#5a5a5a;"></div>
<div style="left:286px;top:199px;width:8px;height:1px;background:#5a5a5a;"></div>
<div style="left:286px;top:201px;width:8px;height:1px;background:#5a5a5a;"></div>
<div style="left:4px;top:391px;width:295px;height:1px;background:#2a2a2a;"></div>
<div style="left:5px;top:391px;width:74px;height:20px;background:#fff;border:1px solid #111;border-top:none;border-bottom-width:2px;border-right-width:2px"></div>
<span class="t" style="left:17px;transform-origin:0 50%;top:394px;">Символы</span>
<span class="t" style="left:90px;transform-origin:0 50%;top:394px;color:#6f6f6f;transform:scaleX(1.009);">Тиковый график</span>
<div style="left:190px;top:396px;width:1px;height:12px;background:#555;"></div>
<div style="left:0px;top:416px;width:303px;height:1px;background:#a8a8a8;"></div>
<div style="left:3px;top:419px;width:296px;height:13px;background:linear-gradient(90deg,#b7c4d5,#c3d0e1 48%,#d6e2f0 85%,#eef3f9 94%,#fbfcfe 96%);"></div>
<span class="t" style="left:6px;transform-origin:0 50%;top:418px;color:#56647a;transform:scaleX(0.919);">Навигатор</span>
<svg style="left:289px;top:422px" width="8" height="8" viewBox="0 0 8 8"><path d="M1.500 1.500l5 4.500M6.500 1.500l-5 4.500" stroke="#000" stroke-width="1.600"/></svg>
<div style="left:3px;top:433px;width:296px;height:248px;background:#fff;border:1px solid #9a9a9a;border-bottom:none;border-right-color:#dcdcdc"></div>
<div style="left:4px;top:434px;width:278px;height:246px;overflow:hidden">
</div>
<svg style="left:9px;top:436px" width="16" height="14" viewBox="0 0 18 16"><rect x="1.500" y="1.500" width="10" height="8" fill="#eef4fb" stroke="#4d7fb5"/><rect x="5.500" y="5.500" width="11" height="9" fill="#eef4fb" stroke="#4d7fb5"/><path d="M7 12l2-3 2 2 2-3 2 2" fill="none" stroke="#4d7fb5" stroke-width=".8"/><path d="M3 4v3M5 3v4" stroke="#4d7fb5" stroke-width=".8"/></svg>
<span class="t" style="left:31px;transform-origin:0 50%;top:437px;transform:scaleX(0.970);">Forex4you</span>
<svg style="left:29px;top:453px" width="18" height="16" viewBox="0 0 18 16"><circle cx="11" cy="4" r="3.200" fill="#f4c93a" stroke="#a07a10"/><rect x="6.500" y="7" width="10" height="8.500" rx="3" fill="#f4c93a" stroke="#a07a10"/><path d="M11 8.500l2 5.500" stroke="#a07a10" stroke-width="1.400"/><circle cx="4.500" cy="7.800" r="2.500" fill="#52c042" stroke="#1f7a1f"/><rect x="1" y="10.300" width="7.500" height="5.200" rx="2.400" fill="#52c042" stroke="#1f7a1f"/></svg>
<span class="t" style="left:52px;transform-origin:0 50%;top:455px;transform:scaleX(0.906);">Счета</span>
<svg style="left:51px;top:472px" width="16" height="16" viewBox="0 0 16 16"><path d="M3.500 2.500l2.500-2h7.500v13l-2.500 2H3.500z" fill="#3296e0" stroke="#1f5f9a" stroke-width=".8"/><path d="M11 2.500v13" stroke="#1f5f9a" stroke-width=".6"/><rect x="5" y="4.500" width="4.500" height="1.200" fill="#d8ecfa"/><rect x="5" y="7" width="4.500" height="1.200" fill="#d8ecfa"/><rect x="5" y="9.500" width="4.500" height="1.200" fill="#d8ecfa"/></svg>
<span class="t" style="left:73px;transform-origin:0 50%;top:473px;transform:scaleX(0.953);">EGlobal-Cent4</span>
<svg style="left:73px;top:490px" width="16" height="16" viewBox="0 0 16 16"><circle cx="7" cy="4.200" r="3.400" fill="#f4c93a" stroke="#a07a10"/><rect x="1" y="7.500" width="12" height="7.700" rx="3.500" fill="#f4c93a" stroke="#a07a10"/><path d="M6.500 9l2.500 5" stroke="#a07a10" stroke-width="1.400"/></svg>
<span class="t" style="left:93px;transform-origin:0 50%;top:491px;transform:scaleX(0.971);">3248262: Ibatullin Marat</span>
<svg style="left:30px;top:507px" width="16" height="16" viewBox="0 0 16 16"><rect x="1.500" y="1.500" width="13" height="13" rx="2" fill="#f8dc62" stroke="#b8941a"/><text x="5" y="12" font-size="12" font-style="italic" font-weight="bold" font-family="Liberation Serif,serif" fill="#8a6a00">f</text></svg>
<span class="t" style="left:52px;transform-origin:0 50%;top:509px;transform:scaleX(1.026);">Индикаторы</span>
<svg style="left:30px;top:525px" width="18" height="16" viewBox="0 0 18 16"><circle cx="8.500" cy="10.500" r="3" fill="#f6dc6a" stroke="#a88a1a" stroke-width=".8"/><ellipse cx="8" cy="7.300" rx="7.600" ry="2.900" fill="#3f9ad8" stroke="#2a6fa8" stroke-width=".8"/><path d="M3.500 6.800C3.500 .800 12.500 .800 12.500 6.800Z" fill="#6fbdf2" stroke="#2a6fa8" stroke-width=".8"/><path d="M4.500 7.500c2 1 5 1 7 0" stroke="#2a6fa8" stroke-width=".6" fill="none"/><path d="M11.500 9.500l4 3-3 3-3.500-3.500z" fill="#f6d958" stroke="#a88a1a" stroke-width=".8"/></svg>
<span class="t" style="left:52px;transform-origin:0 50%;top:527px;transform:scaleX(0.989);">Советники</span>
<svg style="left:51px;top:543px" width="18" height="16" viewBox="0 0 18 16"><circle cx="8.500" cy="10.500" r="3" fill="#f6dc6a" stroke="#a88a1a" stroke-width=".8"/><ellipse cx="8" cy="7.300" rx="7.600" ry="2.900" fill="#3f9ad8" stroke="#2a6fa8" stroke-width=".8"/><path d="M3.500 6.800C3.500 .800 12.500 .800 12.500 6.800Z" fill="#6fbdf2" stroke="#2a6fa8" stroke-width=".8"/><path d="M4.500 7.500c2 1 5 1 7 0" stroke="#2a6fa8" stroke-width=".6" fill="none"/><path d="M11.500 9.500l4 3-3 3-3.500-3.500z" fill="#f6d958" stroke="#a88a1a" stroke-width=".8"/></svg>
<span class="t" style="left:73px;transform-origin:0 50%;top:545px;transform:scaleX(0.911);">BasketBull_v11.451_КВАРТЕТ</span>
<svg style="left:51px;top:561px" width="18" height="16" viewBox="0 0 18 16"><circle cx="8.500" cy="10.500" r="3" fill="#f6dc6a" stroke="#a88a1a" stroke-width=".8"/><ellipse cx="8" cy="7.300" rx="7.600" ry="2.900" fill="#3f9ad8" stroke="#2a6fa8" stroke-width=".8"/><path d="M3.500 6.800C3.500 .800 12.500 .800 12.500 6.800Z" fill="#6fbdf2" stroke="#2a6fa8" stroke-width=".8"/><path d="M4.500 7.500c2 1 5 1 7 0" stroke="#2a6fa8" stroke-width=".6" fill="none"/><path d="M11.500 9.500l4 3-3 3-3.500-3.500z" fill="#f6d958" stroke="#a88a1a" stroke-width=".8"/></svg>
<span class="t" style="left:73px;transform-origin:0 50%;top:563px;transform:scaleX(0.919);">BasketBull_v11.45КВАРТЕТ</span>
<svg style="left:51px;top:579px" width="18" height="16" viewBox="0 0 18 16"><circle cx="8.500" cy="10.500" r="3" fill="#f6dc6a" stroke="#a88a1a" stroke-width=".8"/><ellipse cx="8" cy="7.300" rx="7.600" ry="2.900" fill="#3f9ad8" stroke="#2a6fa8" stroke-width=".8"/><path d="M3.500 6.800C3.500 .800 12.500 .800 12.500 6.800Z" fill="#6fbdf2" stroke="#2a6fa8" stroke-width=".8"/><path d="M4.500 7.500c2 1 5 1 7 0" stroke="#2a6fa8" stroke-width=".6" fill="none"/><path d="M11.500 9.500l4 3-3 3-3.500-3.500z" fill="#f6d958" stroke="#a88a1a" stroke-width=".8"/></svg>
<span class="t" style="left:73px;transform-origin:0 50%;top:581px;transform:scaleX(0.938);">Ilan1.6Dynamic_e-Trall_CDD</span>
<svg style="left:51px;top:597px" width="18" height="16" viewBox="0 0 18 16"><circle cx="8.500" cy="10.500" r="3" fill="#f6dc6a" stroke="#a88a1a" stroke-width=".8"/><ellipse cx="8" cy="7.300" rx="7.600" ry="2.900" fill="#3f9ad8" stroke="#2a6fa8" stroke-width=".8"/><path d="M3.500 6.800C3.500 .800 12.500 .800 12.500 6.800Z" fill="#6fbdf2" stroke="#2a6fa8" stroke-width=".8"/><path d="M4.500 7.500c2 1 5 1 7 0" stroke="#2a6fa8" stroke-width=".6" fill="none"/><path d="M11.500 9.500l4 3-3 3-3.500-3.500z" fill="#f6d958" stroke="#a88a1a" stroke-width=".8"/></svg>
<span class="t" style="left:73px;transform-origin:0 50%;top:599px;transform:scaleX(0.945);">MACD Sample</span>
<svg style="left:51px;top:615px" width="18" height="16" viewBox="0 0 18 16"><circle cx="8.500" cy="10.500" r="3" fill="#f6dc6a" stroke="#a88a1a" stroke-width=".8"/><ellipse cx="8" cy="7.300" rx="7.600" ry="2.900" fill="#3f9ad8" stroke="#2a6fa8" stroke-width=".8"/><path d="M3.500 6.800C3.500 .800 12.500 .800 12.500 6.800Z" fill="#6fbdf2" stroke="#2a6fa8" stroke-width=".8"/><path d="M4.500 7.500c2 1 5 1 7 0" stroke="#2a6fa8" stroke-width=".6" fill="none"/><path d="M11.500 9.500l4 3-3 3-3.500-3.500z" fill="#f6d958" stroke="#a88a1a" stroke-width=".8"/></svg>
<span class="t" style="left:73px;transform-origin:0 50%;top:617px;transform:scaleX(1.014);">Moving Average</span>
<svg style="left:51px;top:633px" width="18" height="16" viewBox="0 0 18 16"><circle cx="8.500" cy="10.500" r="3" fill="#f6dc6a" stroke="#a88a1a" stroke-width=".8"/><ellipse cx="8" cy="7.300" rx="7.600" ry="2.900" fill="#3f9ad8" stroke="#2a6fa8" stroke-width=".8"/><path d="M3.500 6.800C3.500 .800 12.500 .800 12.500 6.800Z" fill="#6fbdf2" stroke="#2a6fa8" stroke-width=".8"/><path d="M4.500 7.500c2 1 5 1 7 0" stroke="#2a6fa8" stroke-width=".6" fill="none"/><path d="M11.500 9.500l4 3-3 3-3.500-3.500z" fill="#f6d958" stroke="#a88a1a" stroke-width=".8"/></svg>
<span class="t" style="left:73px;transform-origin:0 50%;top:635px;transform:scaleX(0.932);">Razrulivatel 27,04,13_edu</span>
<svg style="left:51px;top:651px" width="18" height="16" viewBox="0 0 18 16"><circle cx="8.500" cy="10.500" r="3" fill="#f6dc6a" stroke="#a88a1a" stroke-width=".8"/><ellipse cx="8" cy="7.300" rx="7.600" ry="2.900" fill="#3f9ad8" stroke="#2a6fa8" stroke-width=".8"/><path d="M3.500 6.800C3.500 .800 12.500 .800 12.500 6.800Z" fill="#6fbdf2" stroke="#2a6fa8" stroke-width=".8"/><path d="M4.500 7.500c2 1 5 1 7 0" stroke="#2a6fa8" stroke-width=".6" fill="none"/><path d="M11.500 9.500l4 3-3 3-3.500-3.500z" fill="#f6d958" stroke="#a88a1a" stroke-width=".8"/></svg>
<span class="t" style="left:73px;transform-origin:0 50%;top:653px;">trailingmaster</span>
<div style="left:4px;top:670px;width:278px;height:10px;overflow:hidden">
<svg style="left:47px;top:-1px" width="18" height="16" viewBox="0 0 18 16"><circle cx="8.500" cy="10.500" r="3" fill="#f6dc6a" stroke="#a88a1a" stroke-width=".8"/><ellipse cx="8" cy="7.300" rx="7.600" ry="2.900" fill="#3f9ad8" stroke="#2a6fa8" stroke-width=".8"/><path d="M3.500 6.800C3.500 .800 12.500 .800 12.500 6.800Z" fill="#6fbdf2" stroke="#2a6fa8" stroke-width=".8"/><path d="M4.500 7.500c2 1 5 1 7 0" stroke="#2a6fa8" stroke-width=".6" fill="none"/><path d="M11.500 9.500l4 3-3 3-3.500-3.500z" fill="#f6d958" stroke="#a88a1a" stroke-width=".8"/></svg>
<span class="t" style="left:69px;top:1px;transform-origin:0 50%;transform:scaleX(.9)">Оторва</span>
</div>
<div style="left:17px;top:452px;width:0px;height:229px;border-left:1px dotted #9a9a9a"></div>
<div style="left:38px;top:542px;width:0px;height:139px;border-left:1px dotted #9a9a9a"></div>
<div style="left:38px;top:470px;width:0px;height:12px;border-left:1px dotted #9a9a9a"></div>
<div style="left:59px;top:488px;width:0px;height:12px;border-left:1px dotted #9a9a9a"></div>
<div style="left:59px;top:499px;width:11px;height:0px;border-top:1px dotted #9a9a9a"></div>
<div style="left:13px;top:457px;width:9px;height:9px;background:#fff;border:1px solid #8f8f8f"></div>
<div style="left:15px;top:461px;width:5px;height:1px;background:#222;"></div>
<div style="left:22px;top:461px;width:5px;height:0px;border-top:1px dotted #9a9a9a"></div>
<div style="left:34px;top:475px;width:9px;height:9px;background:#fff;border:1px solid #8f8f8f"></div>
<div style="left:36px;top:479px;width:5px;height:1px;background:#222;"></div>
<div style="left:43px;top:479px;width:5px;height:0px;border-top:1px dotted #9a9a9a"></div>
<div style="left:13px;top:511px;width:9px;height:9px;background:#fff;border:1px solid #8f8f8f"></div>
<div style="left:15px;top:515px;width:5px;height:1px;background:#222;"></div>
<div style="left:17px;top:513px;width:1px;height:5px;background:#222;"></div>
<div style="left:22px;top:515px;width:5px;height:0px;border-top:1px dotted #9a9a9a"></div>
<div style="left:13px;top:529px;width:9px;height:9px;background:#fff;border:1px solid #8f8f8f"></div>
<div style="left:15px;top:533px;width:5px;height:1px;background:#222;"></div>
<div style="left:22px;top:533px;width:5px;height:0px;border-top:1px dotted #9a9a9a"></div>
<div style="left:38px;top:552px;width:12px;height:0px;border-top:1px dotted #9a9a9a"></div>
<div style="left:38px;top:570px;width:12px;height:0px;border-top:1px dotted #9a9a9a"></div>
<div style="left:38px;top:588px;width:12px;height:0px;border-top:1px dotted #9a9a9a"></div>
<div style="left:38px;top:606px;width:12px;height:0px;border-top:1px dotted #9a9a9a"></div>
<div style="left:38px;top:624px;width:12px;height:0px;border-top:1px dotted #9a9a9a"></div>
<div style="left:38px;top:642px;width:12px;height:0px;border-top:1px dotted #9a9a9a"></div>
<div style="left:38px;top:660px;width:12px;height:0px;border-top:1px dotted #9a9a9a"></div>
<div style="left:38px;top:678px;width:12px;height:0px;border-top:1px dotted #9a9a9a"></div>
<div style="left:282px;top:434px;width:16px;height:246px;background:#f5f5f5;"></div>
<div style="left:282px;top:451px;width:16px;height:184px;background:linear-gradient(90deg,#f5f5f5,#e6e6e6 45%,#d6d6d6 50%,#dcdcdc);border:1px solid #8e8e8e;border-radius:2px"></div>
<svg style="left:286px;top:440px" width="8" height="5" viewBox="0 0 8 5"><path d="M.500 4.500L4 .800 7.500 4.500z" fill="#505050"/></svg>
<svg style="left:286px;top:670px" width="8" height="5" viewBox="0 0 8 5"><path d="M.500 .500L4 4.200 7.500 .500z" fill="#505050"/></svg>
<div style="left:286px;top:539px;width:8px;height:1px;background:#5a5a5a;"></div>
<div style="left:286px;top:541px;width:8px;height:1px;background:#5a5a5a;"></div>
<div style="left:286px;top:543px;width:8px;height:1px;background:#5a5a5a;"></div>
<div style="left:286px;top:545px;width:8px;height:1px;background:#5a5a5a;"></div>
<div style="left:4px;top:680px;width:295px;height:1px;background:#2a2a2a;"></div>
<div style="left:5px;top:680px;width:61px;height:20px;background:#fff;border:1px solid #111;border-top:none;border-bottom-width:2px;border-right-width:2px"></div>
<span class="t" style="left:17px;transform-origin:0 50%;top:683px;transform:scaleX(0.988);">Общие</span>
<span class="t" style="left:76px;transform-origin:0 50%;top:683px;color:#6f6f6f;">Избранное</span>
<div style="left:147px;top:685px;width:1px;height:12px;background:#555;"></div>
<div style="left:299px;top:71px;width:4px;height:636px;background:#fafafa;"></div>
<div style="left:303px;top:71px;width:1px;height:636px;background:#8a8a8a;"></div>
<div style="left:304px;top:71px;width:974px;height:613px;background:#000;"></div>
<div style="left:306px;top:73px;width:930px;height:591px;border:1px solid #fff"></div>
<svg style="left:310px;top:80px" width="8" height="5" viewBox="0 0 8 5"><path d="M0 0h7L3.500 4z" fill="#fff"/></svg>
<span class="t" style="left:322px;transform-origin:0 50%;top:75px;font-size:9.3px;color:#fff;transform:scaleX(1.030);">CHFJPY,M1</span>
<span class="t" style="left:311px;transform-origin:0 50%;top:88px;font-size:9.3px;color:#fff;transform:scaleX(1.012);">Процент прибыли относительно баланса на начало квартала</span>
<div style="left:1236px;top:100px;width:2px;height:1px;background:#fff;"></div>
<span class="t" style="left:1241.5px;transform-origin:0 50%;top:93.5px;font-size:9.3px;color:#fff;">113.850</span>
<div style="left:1236px;top:136px;width:2px;height:1px;background:#fff;"></div>
<span class="t" style="left:1241.5px;transform-origin:0 50%;top:129.5px;font-size:9.3px;color:#fff;">113.795</span>
<div style="left:1236px;top:171px;width:2px;height:1px;background:#fff;"></div>
<span class="t" style="left:1241.5px;transform-origin:0 50%;top:164.5px;font-size:9.3px;color:#fff;">113.740</span>
<div style="left:1236px;top:204px;width:2px;height:1px;background:#fff;"></div>
<span class="t" style="left:1241.5px;transform-origin:0 50%;top:197.5px;font-size:9.3px;color:#fff;">113.690</span>
<div style="left:1236px;top:239px;width:2px;height:1px;background:#fff;"></div>
<span class="t" style="left:1241.5px;transform-origin:0 50%;top:232.5px;font-size:9.3px;color:#fff;">113.635</span>
<div style="left:1236px;top:275px;width:2px;height:1px;background:#fff;"></div>
<span class="t" style="left:1241.5px;transform-origin:0 50%;top:268.5px;font-size:9.3px;color:#fff;">113.580</span>
<div style="left:1236px;top:310px;width:2px;height:1px;background:#fff;"></div>
<span class="t" style="left:1241.5px;transform-origin:0 50%;top:303.5px;font-size:9.3px;color:#fff;">113.525</span>
<div style="left:1236px;top:346px;width:2px;height:1px;background:#fff;"></div>
<span class="t" style="left:1241.5px;transform-origin:0 50%;top:339.5px;font-size:9.3px;color:#fff;">113.470</span>
<div style="left:1236px;top:381px;width:2px;height:1px;background:#fff;"></div>
<span class="t" style="left:1241.5px;transform-origin:0 50%;top:374.5px;font-size:9.3px;color:#fff;">113.415</span>
<div style="left:1236px;top:414px;width:2px;height:1px;background:#fff;"></div>
<span class="t" style="left:1241.5px;transform-origin:0 50%;top:407.5px;font-size:9.3px;color:#fff;">113.365</span>
<div style="left:1236px;top:449px;width:2px;height:1px;background:#fff;"></div>
<span class="t" style="left:1241.5px;transform-origin:0 50%;top:442.5px;font-size:9.3px;color:#fff;">113.310</span>
<div style="left:1236px;top:485px;width:2px;height:1px;background:#fff;"></div>
<span class="t" style="left:1241.5px;transform-origin:0 50%;top:478.5px;font-size:9.3px;color:#fff;">113.255</span>
<div style="left:1236px;top:520px;width:2px;height:1px;background:#fff;"></div>
<span class="t" style="left:1241.5px;transform-origin:0 50%;top:513.5px;font-size:9.3px;color:#fff;">113.200</span>
<div style="left:1236px;top:556px;width:2px;height:1px;background:#fff;"></div>
<span class="t" style="left:1241.5px;transform-origin:0 50%;top:549.5px;font-size:9.3px;color:#fff;">113.145</span>
<div style="left:1236px;top:591px;width:2px;height:1px;background:#fff;"></div>
<span class="t" style="left:1241.5px;transform-origin:0 50%;top:584.5px;font-size:9.3px;color:#fff;">113.090</span>
<div style="left:1236px;top:624px;width:2px;height:1px;background:#fff;"></div>
<span class="t" style="left:1241.5px;transform-origin:0 50%;top:617.5px;font-size:9.3px;color:#fff;">113.040</span>
<div style="left:1236px;top:659px;width:2px;height:1px;background:#fff;"></div>
<span class="t" style="left:1241.5px;transform-origin:0 50%;top:652.5px;font-size:9.3px;color:#fff;">112.985</span>
<div style="left:1237px;top:381px;width:41px;height:11px;background:#fff;"></div>
<div style="left:1236px;top:386px;width:2px;height:1px;background:#fff;"></div>
<span class="t" style="left:1241px;transform-origin:0 50%;top:379px;font-size:9.3px;color:#000;">113.408</span>
<div style="left:307px;top:663px;width:1px;height:4px;background:#fff;"></div>
<span class="t" style="left:306.5px;transform-origin:0 50%;top:666px;font-size:9.3px;color:#fff;">11 Jan 2017</span>
<div style="left:371px;top:663px;width:1px;height:4px;background:#fff;"></div>
<span class="t" style="left:370.5px;transform-origin:0 50%;top:666px;font-size:9.3px;color:#fff;">11 Jan 19:30</span>
<div style="left:435px;top:663px;width:1px;height:4px;background:#fff;"></div>
<span class="t" style="left:434.5px;transform-origin:0 50%;top:666px;font-size:9.3px;color:#fff;">11 Jan 19:46</span>
<div style="left:499px;top:663px;width:1px;height:4px;background:#fff;"></div>
<span class="t" style="left:498.5px;transform-origin:0 50%;top:666px;font-size:9.3px;color:#fff;">11 Jan 20:02</span>
<div style="left:563px;top:663px;width:1px;height:4px;background:#fff;"></div>
<span class="t" style="left:562.5px;transform-origin:0 50%;top:666px;font-size:9.3px;color:#fff;">11 Jan 20:18</span>
<div style="left:627px;top:663px;width:1px;height:4px;background:#fff;"></div>
<span class="t" style="left:626.5px;transform-origin:0 50%;top:666px;font-size:9.3px;color:#fff;">11 Jan 20:34</span>
<div style="left:691px;top:663px;width:1px;height:4px;background:#fff;"></div>
<span class="t" style="left:690.5px;transform-origin:0 50%;top:666px;font-size:9.3px;color:#fff;">11 Jan 20:50</span>
<div style="left:755px;top:663px;width:1px;height:4px;background:#fff;"></div>
<span class="t" style="left:754.5px;transform-origin:0 50%;top:666px;font-size:9.3px;color:#fff;">11 Jan 21:06</span>
<div style="left:819px;top:663px;width:1px;height:4px;background:#fff;"></div>
<span class="t" style="left:818.5px;transform-origin:0 50%;top:666px;font-size:9.3px;color:#fff;">11 Jan 21:22</span>
<div style="left:883px;top:663px;width:1px;height:4px;background:#fff;"></div>
<span class="t" style="left:882.5px;transform-origin:0 50%;top:666px;font-size:9.3px;color:#fff;">11 Jan 21:38</span>
<div style="left:947px;top:663px;width:1px;height:4px;background:#fff;"></div>
<span class="t" style="left:946.5px;transform-origin:0 50%;top:666px;font-size:9.3px;color:#fff;">11 Jan 21:54</span>
<div style="left:1011px;top:663px;width:1px;height:4px;background:#fff;"></div>
<span class="t" style="left:1010.5px;transform-origin:0 50%;top:666px;font-size:9.3px;color:#fff;">11 Jan 22:10</span>
<div style="left:1075px;top:663px;width:1px;height:4px;background:#fff;"></div>
<span class="t" style="left:1074.5px;transform-origin:0 50%;top:666px;font-size:9.3px;color:#fff;">11 Jan 22:26</span>
<div style="left:1139px;top:663px;width:1px;height:4px;background:#fff;"></div>
<span class="t" style="left:1138.5px;transform-origin:0 50%;top:666px;font-size:9.3px;color:#fff;">11 Jan 22:42</span>
<div style="left:1203px;top:663px;width:1px;height:4px;background:#fff;"></div>
<span class="t" style="left:1202.5px;transform-origin:0 50%;top:666px;font-size:9.3px;color:#fff;">11 Jan 22:58</span>
<span class="t" style="left:334.5px;transform-origin:0 50%;top:375px;color:#e8cc54;transform:scaleX(1.044);">Прибыль</span>
<span class="t" style="left:656.5px;transform-origin:0 50%;top:375px;color:#e8cc54;transform:scaleX(0.995);">в пунктах</span>
<span class="t" style="left:771.5px;transform-origin:0 50%;top:375px;color:#e8cc54;">в валюте</span>
<span class="t" style="left:309.5px;transform-origin:0 50%;top:387px;color:#e8cc54;transform:scaleX(1.033);">Текущая прибыль</span>
<span class="t" style="left:672px;transform-origin:0 50%;top:387px;color:#f0984a;transform:scaleX(1.033);">-4720</span>
<span class="t" style="left:737px;transform-origin:0 50%;top:387px;color:#f0984a;transform:scaleX(1.033);">-74.30</span>
<span class="t" style="left:812px;transform-origin:0 50%;top:387px;color:#f0984a;transform:scaleX(1.033);">-2.50 %</span>
<span class="t" style="left:309.5px;transform-origin:0 50%;top:399px;color:#e8cc54;transform:scaleX(1.033);">Прибыль за сегодня</span>
<span class="t" style="left:673px;transform-origin:0 50%;top:399px;color:#8a8748;transform:scaleX(1.033);">1911</span>
<span class="t" style="left:737px;transform-origin:0 50%;top:399px;color:#8a8748;transform:scaleX(1.033);">48.35</span>
<span class="t" style="left:812px;transform-origin:0 50%;top:399px;color:#8a8748;transform:scaleX(1.033);">1.62 %</span>
<span class="t" style="left:309.5px;transform-origin:0 50%;top:411px;color:#e8cc54;transform:scaleX(1.033);">Прибыль за 2017.01.11</span>
<span class="t" style="left:673px;transform-origin:0 50%;top:411px;color:#8a8748;transform:scaleX(1.033);">2391</span>
<span class="t" style="left:737px;transform-origin:0 50%;top:411px;color:#8a8748;transform:scaleX(1.033);">39.76</span>
<span class="t" style="left:812px;transform-origin:0 50%;top:411px;color:#8a8748;transform:scaleX(1.033);">1.34 %</span>
<span class="t" style="left:309.5px;transform-origin:0 50%;top:423px;color:#e8cc54;transform:scaleX(1.033);">Прибыль за 2017.01.10</span>
<span class="t" style="left:673px;transform-origin:0 50%;top:423px;color:#8a8748;transform:scaleX(1.033);">1883</span>
<span class="t" style="left:737px;transform-origin:0 50%;top:423px;color:#8a8748;transform:scaleX(1.033);">37.14</span>
<span class="t" style="left:812px;transform-origin:0 50%;top:423px;color:#8a8748;transform:scaleX(1.033);">1.25 %</span>
<span class="t" style="left:309.5px;transform-origin:0 50%;top:435px;color:#e8cc54;transform:scaleX(1.033);">Прибыль за 2017.01.09</span>
<span class="t" style="left:673px;transform-origin:0 50%;top:435px;color:#8a8748;transform:scaleX(1.033);">1649</span>
<span class="t" style="left:737px;transform-origin:0 50%;top:435px;color:#8a8748;transform:scaleX(1.033);">57.63</span>
<span class="t" style="left:812px;transform-origin:0 50%;top:435px;color:#8a8748;transform:scaleX(1.033);">1.94 %</span>
<span class="t" style="left:309.5px;transform-origin:0 50%;top:447px;color:#e8cc54;transform:scaleX(1.033);">Прибыль за 2017.01.06</span>
<span class="t" style="left:673px;transform-origin:0 50%;top:447px;color:#8a8748;transform:scaleX(1.033);">1295</span>
<span class="t" style="left:737px;transform-origin:0 50%;top:447px;color:#8a8748;transform:scaleX(1.033);">22.15</span>
<span class="t" style="left:812px;transform-origin:0 50%;top:447px;color:#8a8748;transform:scaleX(1.033);">0.74 %</span>
<span class="t" style="left:309.5px;transform-origin:0 50%;top:459px;color:#e8cc54;transform:scaleX(1.033);">Прибыль за неделю</span>
<span class="t" style="left:673px;transform-origin:0 50%;top:459px;color:#8a8748;transform:scaleX(1.033);">7834</span>
<span class="t" style="left:737px;transform-origin:0 50%;top:459px;color:#8a8748;transform:scaleX(1.033);">182.88</span>
<span class="t" style="left:812px;transform-origin:0 50%;top:459px;color:#8a8748;transform:scaleX(1.033);">6.14 %</span>
<span class="t" style="left:309.5px;transform-origin:0 50%;top:471px;color:#e8cc54;transform:scaleX(1.033);">Прибыль за месяц</span>
<span class="t" style="left:672px;transform-origin:0 50%;top:471px;color:#f0984a;transform:scaleX(1.033);">-28089</span>
<span class="t" style="left:737px;transform-origin:0 50%;top:471px;color:#8a8748;transform:scaleX(1.033);">265.99</span>
<span class="t" style="left:812px;transform-origin:0 50%;top:471px;color:#8a8748;transform:scaleX(1.033);">8.93 %</span>
<span class="t" style="left:309.5px;transform-origin:0 50%;top:483px;color:#e8cc54;transform:scaleX(1.033);">Прибыль за квартал</span>
<span class="t" style="left:672px;transform-origin:0 50%;top:483px;color:#f0984a;transform:scaleX(1.033);">-28089</span>
<span class="t" style="left:737px;transform-origin:0 50%;top:483px;color:#8a8748;transform:scaleX(1.033);">265.99</span>
<span class="t" style="left:812px;transform-origin:0 50%;top:483px;color:#8a8748;transform:scaleX(1.033);">8.93 %</span>
<span class="t" style="left:309.5px;transform-origin:0 50%;top:495px;color:#e8cc54;transform:scaleX(1.033);">Прибыль за год</span>
<span class="t" style="left:672px;transform-origin:0 50%;top:495px;color:#f0984a;transform:scaleX(1.033);">-28089</span>
<span class="t" style="left:737px;transform-origin:0 50%;top:495px;color:#8a8748;transform:scaleX(1.033);">265.99</span>
<span class="t" style="left:812px;transform-origin:0 50%;top:495px;color:#8a8748;transform:scaleX(1.033);">8.93 %</span>
<span class="t" style="left:312px;transform-origin:0 50%;top:495.5px;font-size:11px;color:#f2e04a;transform:scaleX(1.070);">#01.01.17 за год</span>
<div style="left:304px;top:684px;width:976px;height:2px;background:#f0f0f0;"></div>
<div style="left:304px;top:685px;width:974px;height:1px;background:#111;"></div>
<div style="left:304px;top:685px;width:1px;height:21px;background:#888;"></div>
<span class="t" style="left:320px;transform-origin:0 50%;top:689px;color:#6f6f6f;transform:scaleX(0.869);">GBPJPY,H1</span>
<div style="left:388px;top:691px;width:1px;height:12px;background:#555;"></div>
<span class="t" style="left:399px;transform-origin:0 50%;top:689px;color:#6f6f6f;transform:scaleX(0.927);">CADJPY,M5</span>
<div style="left:471px;top:685px;width:85px;height:21px;background:#fff;border:1px solid #111;border-top:none;border-bottom-width:2px;border-right-width:2px"></div>
<span class="t" style="left:483px;transform-origin:0 50%;top:689px;transform:scaleX(0.921);">CHFJPY,M1</span>
<svg style="left:1246px;top:691px" width="6" height="9" viewBox="0 0 6 9"><path d="M5.500 0.500v8L.500 4.500z" fill="#b0b0b0"/></svg>
<svg style="left:1265px;top:691px" width="6" height="9" viewBox="0 0 6 9"><path d="M.500 .500v8l5-4z" fill="#b0b0b0"/></svg>
<div style="left:0px;top:705px;width:303px;height:1px;background:#a8a8a8;"></div>
<div style="left:0px;top:706px;width:1280px;height:1px;background:#fbfbfb;"></div>
<div style="left:0px;top:708px;width:15px;height:252px;background:linear-gradient(#f6f8fb 0%,#e6ecf4 14%,#d0dae8 40%,#c0cddf 75%,#bac8db 100%);"></div>
<svg style="left:3px;top:712px" width="8" height="8" viewBox="0 0 8 8"><path d="M1.500 1.500l5 4.500M6.500 1.500l-5 4.500" stroke="#000" stroke-width="1.600"/></svg>
<span class="t" style="left:-20px;top:921.5px;width:54px;text-align:center;color:#56647a;transform:rotate(-90deg) scaleX(.85)">Терминал</span>
<div style="left:15px;top:710px;width:1263px;height:226px;background:#fff;border:1px solid #9a9a9a;border-bottom:none;border-right-color:#e4e4e4"></div>
<div style="left:16px;top:711px;width:1242px;height:23px;background:linear-gradient(#fff,#fff 45%,#f1f2f4);border-bottom:1px solid #d5d5d5"></div>
<div style="left:101px;top:711px;width:1px;height:23px;background:#e0e1e4;"></div>
<span class="t" style="left:22.5px;transform-origin:0 50%;top:716px;">Ордер</span>
<div style="left:248px;top:711px;width:1px;height:23px;background:#e0e1e4;"></div>
<span class="t" style="right:1037.5px;transform-origin:100% 50%;top:716px;transform:scaleX(0.942);">Время</span>
<div style="left:315px;top:711px;width:1px;height:23px;background:#e0e1e4;"></div>
<span class="t" style="right:970.5px;transform-origin:100% 50%;top:716px;">Тип</span>
<div style="left:368px;top:711px;width:1px;height:23px;background:#e0e1e4;"></div>
<span class="t" style="right:917.5px;transform-origin:100% 50%;top:716px;transform:scaleX(0.968);">Объем</span>
<div style="left:433px;top:711px;width:1px;height:23px;background:#e0e1e4;"></div>
<span class="t" style="right:852.5px;transform-origin:100% 50%;top:716px;transform:scaleX(0.971);">Символ</span>
<div style="left:498px;top:711px;width:1px;height:23px;background:#e0e1e4;"></div>
<span class="t" style="right:787.5px;transform-origin:100% 50%;top:716px;transform:scaleX(0.970);">Цена</span>
<div style="left:565px;top:711px;width:1px;height:23px;background:#e0e1e4;"></div>
<span class="t" style="right:720.5px;transform-origin:100% 50%;top:716px;transform:scaleX(0.932);">S / L</span>
<div style="left:631px;top:711px;width:1px;height:23px;background:#e0e1e4;"></div>
<span class="t" style="right:654.5px;transform-origin:100% 50%;top:716px;transform:scaleX(0.955);">T / P</span>
<div style="left:778px;top:711px;width:1px;height:23px;background:#e0e1e4;"></div>
<span class="t" style="right:527px;transform-origin:100% 50%;top:716px;transform:scaleX(0.942);">Время</span>
<div style="left:844px;top:711px;width:1px;height:23px;background:#e0e1e4;"></div>
<span class="t" style="right:441.5px;transform-origin:100% 50%;top:716px;transform:scaleX(0.970);">Цена</span>
<div style="left:910px;top:711px;width:1px;height:23px;background:#e0e1e4;"></div>
<span class="t" style="right:375.5px;transform-origin:100% 50%;top:716px;transform:scaleX(0.988);">Комисс...</span>
<div style="left:976px;top:711px;width:1px;height:23px;background:#e0e1e4;"></div>
<span class="t" style="right:309.5px;transform-origin:100% 50%;top:716px;transform:scaleX(0.962);">Своп</span>
<div style="left:1049px;top:711px;width:1px;height:23px;background:#e0e1e4;"></div>
<span class="t" style="right:236.5px;transform-origin:100% 50%;top:716px;transform:scaleX(1.025);">Прибыль</span>
<div style="left:1258px;top:711px;width:1px;height:23px;background:#e0e1e4;"></div>
<span class="t" style="right:27.5px;transform-origin:100% 50%;top:716px;transform:scaleX(0.992);">Комментарий</span>
<svg style="left:765px;top:719px" width="6" height="7" viewBox="0 0 6 7"><path d="M4.500 1L1.500 6" stroke="#555" stroke-width=".8"/></svg>
<div style="left:16px;top:735px;width:1242px;height:21px;background:#fff;border-bottom:1px solid #d8d8d8"></div>
<div style="left:101px;top:735px;width:1px;height:21px;background:#d8d8d8;"></div>
<div style="left:248px;top:735px;width:1px;height:21px;background:#d8d8d8;"></div>
<div style="left:315px;top:735px;width:1px;height:21px;background:#d8d8d8;"></div>
<div style="left:368px;top:735px;width:1px;height:21px;background:#d8d8d8;"></div>
<div style="left:433px;top:735px;width:1px;height:21px;background:#d8d8d8;"></div>
<div style="left:498px;top:735px;width:1px;height:21px;background:#d8d8d8;"></div>
<div style="left:565px;top:735px;width:1px;height:21px;background:#d8d8d8;"></div>
<div style="left:631px;top:735px;width:1px;height:21px;background:#d8d8d8;"></div>
<div style="left:778px;top:735px;width:1px;height:21px;background:#d8d8d8;"></div>
<div style="left:844px;top:735px;width:1px;height:21px;background:#d8d8d8;"></div>
<div style="left:910px;top:735px;width:1px;height:21px;background:#d8d8d8;"></div>
<div style="left:976px;top:735px;width:1px;height:21px;background:#d8d8d8;"></div>
<div style="left:1049px;top:735px;width:1px;height:21px;background:#d8d8d8;"></div>
<div style="left:566px;top:735px;width:63px;height:20px;background:#60e460;"></div>
<svg style="left:19px;top:737px" width="16" height="18" viewBox="0 0 16 18"><path d="M.500 1.500h7.500l3 3v9.500h-10.500z" fill="#fdfdfd" stroke="#5a5f6a"/><path d="M8 1.500v3h3" fill="none" stroke="#5a5f6a"/><circle cx="11" cy="12.500" r="3.200" fill="#2f9be8" stroke="#1c62a0"/></svg>
<span class="t" style="left:37px;transform-origin:0 50%;top:738.5px;color:#000;transform:scaleX(0.899);">140942342</span>
<span class="t" style="right:1035.5px;transform-origin:100% 50%;top:738.5px;color:#000;transform:scaleX(0.899);">2017.01.09 06:53:09</span>
<span class="t" style="right:968.5px;transform-origin:100% 50%;top:738.5px;color:#000;transform:scaleX(1.034);">buy</span>
<span class="t" style="right:915.5px;transform-origin:100% 50%;top:738.5px;color:#000;transform:scaleX(0.899);">0.07</span>
<span class="t" style="right:850.5px;transform-origin:100% 50%;top:738.5px;color:#000;transform:scaleX(1.016);">gbpusd</span>
<span class="t" style="right:785.5px;transform-origin:100% 50%;top:738.5px;color:#000;transform:scaleX(0.899);">1.21820</span>
<span class="t" style="right:718.5px;transform-origin:100% 50%;top:738.5px;color:#000;transform:scaleX(0.899);">0.00000</span>
<span class="t" style="right:652.5px;transform-origin:100% 50%;top:738.5px;color:#000;transform:scaleX(0.899);">1.21994</span>
<span class="t" style="right:505.5px;transform-origin:100% 50%;top:738.5px;color:#000;transform:scaleX(0.906);">2017.01.11 19:08:29</span>
<span class="t" style="right:439.5px;transform-origin:100% 50%;top:738.5px;color:#000;transform:scaleX(0.899);">1.21994</span>
<span class="t" style="right:373.5px;transform-origin:100% 50%;top:738.5px;color:#000;transform:scaleX(0.951);">-0.70</span>
<span class="t" style="right:307.5px;transform-origin:100% 50%;top:738.5px;color:#000;transform:scaleX(0.951);">-0.36</span>
<span class="t" style="right:234.5px;transform-origin:100% 50%;top:738.5px;color:#000;transform:scaleX(0.927);">11.76</span>
<span class="t" style="right:25.5px;transform-origin:100% 50%;top:738.5px;color:#000;transform:scaleX(1.087);">bbb+++5[tp]</span>
<div style="left:16px;top:756px;width:1242px;height:20px;background:#ececec;border-bottom:1px solid #d8d8d8"></div>
<div style="left:101px;top:756px;width:1px;height:20px;background:#d8d8d8;"></div>
<div style="left:248px;top:756px;width:1px;height:20px;background:#d8d8d8;"></div>
<div style="left:315px;top:756px;width:1px;height:20px;background:#d8d8d8;"></div>
<div style="left:368px;top:756px;width:1px;height:20px;background:#d8d8d8;"></div>
<div style="left:433px;top:756px;width:1px;height:20px;background:#d8d8d8;"></div>
<div style="left:498px;top:756px;width:1px;height:20px;background:#d8d8d8;"></div>
<div style="left:565px;top:756px;width:1px;height:20px;background:#d8d8d8;"></div>
<div style="left:631px;top:756px;width:1px;height:20px;background:#d8d8d8;"></div>
<div style="left:778px;top:756px;width:1px;height:20px;background:#d8d8d8;"></div>
<div style="left:844px;top:756px;width:1px;height:20px;background:#d8d8d8;"></div>
<div style="left:910px;top:756px;width:1px;height:20px;background:#d8d8d8;"></div>
<div style="left:976px;top:756px;width:1px;height:20px;background:#d8d8d8;"></div>
<div style="left:1049px;top:756px;width:1px;height:20px;background:#d8d8d8;"></div>
<div style="left:566px;top:756px;width:63px;height:19px;background:#60e460;"></div>
<svg style="left:19px;top:757px" width="16" height="18" viewBox="0 0 16 18"><path d="M.500 1.500h7.500l3 3v9.500h-10.500z" fill="#fdfdfd" stroke="#5a5f6a"/><path d="M8 1.500v3h3" fill="none" stroke="#5a5f6a"/><circle cx="11" cy="12.500" r="3.200" fill="#2f9be8" stroke="#1c62a0"/></svg>
<span class="t" style="left:37px;transform-origin:0 50%;top:758.5px;color:#000;transform:scaleX(0.899);">140931034</span>
<span class="t" style="right:1035.5px;transform-origin:100% 50%;top:758.5px;color:#000;transform:scaleX(0.899);">2017.01.09 05:55:02</span>
<span class="t" style="right:968.5px;transform-origin:100% 50%;top:758.5px;color:#000;transform:scaleX(1.034);">buy</span>
<span class="t" style="right:915.5px;transform-origin:100% 50%;top:758.5px;color:#000;transform:scaleX(0.899);">0.05</span>
<span class="t" style="right:850.5px;transform-origin:100% 50%;top:758.5px;color:#000;transform:scaleX(1.016);">gbpusd</span>
<span class="t" style="right:785.5px;transform-origin:100% 50%;top:758.5px;color:#000;transform:scaleX(0.899);">1.22323</span>
<span class="t" style="right:718.5px;transform-origin:100% 50%;top:758.5px;color:#000;transform:scaleX(0.899);">0.00000</span>
<span class="t" style="right:652.5px;transform-origin:100% 50%;top:758.5px;color:#000;transform:scaleX(0.899);">1.22490</span>
<span class="t" style="right:505.5px;transform-origin:100% 50%;top:758.5px;color:#000;transform:scaleX(0.906);">2017.01.11 19:09:49</span>
<span class="t" style="right:439.5px;transform-origin:100% 50%;top:758.5px;color:#000;transform:scaleX(0.899);">1.22490</span>
<span class="t" style="right:373.5px;transform-origin:100% 50%;top:758.5px;color:#000;transform:scaleX(0.951);">-0.50</span>
<span class="t" style="right:307.5px;transform-origin:100% 50%;top:758.5px;color:#000;transform:scaleX(0.951);">-0.26</span>
<span class="t" style="right:234.5px;transform-origin:100% 50%;top:758.5px;color:#000;transform:scaleX(0.899);">8.35</span>
<span class="t" style="right:25.5px;transform-origin:100% 50%;top:758.5px;color:#000;transform:scaleX(1.087);">bbb+++4[tp]</span>
<div style="left:16px;top:776px;width:1242px;height:20px;background:#fff;border-bottom:1px solid #d8d8d8"></div>
<div style="left:101px;top:776px;width:1px;height:20px;background:#d8d8d8;"></div>
<div style="left:248px;top:776px;width:1px;height:20px;background:#d8d8d8;"></div>
<div style="left:315px;top:776px;width:1px;height:20px;background:#d8d8d8;"></div>
<div style="left:368px;top:776px;width:1px;height:20px;background:#d8d8d8;"></div>
<div style="left:433px;top:776px;width:1px;height:20px;background:#d8d8d8;"></div>
<div style="left:498px;top:776px;width:1px;height:20px;background:#d8d8d8;"></div>
<div style="left:565px;top:776px;width:1px;height:20px;background:#d8d8d8;"></div>
<div style="left:631px;top:776px;width:1px;height:20px;background:#d8d8d8;"></div>
<div style="left:778px;top:776px;width:1px;height:20px;background:#d8d8d8;"></div>
<div style="left:844px;top:776px;width:1px;height:20px;background:#d8d8d8;"></div>
<div style="left:910px;top:776px;width:1px;height:20px;background:#d8d8d8;"></div>
<div style="left:976px;top:776px;width:1px;height:20px;background:#d8d8d8;"></div>
<div style="left:1049px;top:776px;width:1px;height:20px;background:#d8d8d8;"></div>
<div style="left:566px;top:776px;width:63px;height:19px;background:#60e460;"></div>
<svg style="left:19px;top:777px" width="16" height="18" viewBox="0 0 16 18"><path d="M.500 1.500h7.500l3 3v9.500h-10.500z" fill="#fdfdfd" stroke="#5a5f6a"/><path d="M8 1.500v3h3" fill="none" stroke="#5a5f6a"/><circle cx="11" cy="12.500" r="3.200" fill="#ea5a2e" stroke="#9a2f12"/></svg>
<span class="t" style="left:37px;transform-origin:0 50%;top:778.5px;color:#000;transform:scaleX(0.899);">138121029</span>
<span class="t" style="right:1035.5px;transform-origin:100% 50%;top:778.5px;color:#000;transform:scaleX(0.899);">2016.12.12 17:40:09</span>
<span class="t" style="right:968.5px;transform-origin:100% 50%;top:778.5px;color:#000;transform:scaleX(0.944);">sell</span>
<span class="t" style="right:915.5px;transform-origin:100% 50%;top:778.5px;color:#000;transform:scaleX(0.899);">0.01</span>
<span class="t" style="right:850.5px;transform-origin:100% 50%;top:778.5px;color:#000;transform:scaleX(1.053);">chfjpy</span>
<span class="t" style="right:785.5px;transform-origin:100% 50%;top:778.5px;color:#000;transform:scaleX(0.918);">113.685</span>
<span class="t" style="right:718.5px;transform-origin:100% 50%;top:778.5px;color:#000;transform:scaleX(0.899);">0.000</span>
<span class="t" style="right:652.5px;transform-origin:100% 50%;top:778.5px;color:#000;transform:scaleX(0.918);">113.089</span>
<span class="t" style="right:505.5px;transform-origin:100% 50%;top:778.5px;color:#000;transform:scaleX(0.914);">2017.01.11 19:11:05</span>
<span class="t" style="right:439.5px;transform-origin:100% 50%;top:778.5px;color:#000;transform:scaleX(0.918);">113.084</span>
<span class="t" style="right:373.5px;transform-origin:100% 50%;top:778.5px;color:#000;transform:scaleX(0.951);">-0.10</span>
<span class="t" style="right:307.5px;transform-origin:100% 50%;top:778.5px;color:#000;transform:scaleX(0.899);">0.30</span>
<span class="t" style="right:234.5px;transform-origin:100% 50%;top:778.5px;color:#000;transform:scaleX(0.899);">5.26</span>
<span class="t" style="right:25.5px;transform-origin:100% 50%;top:778.5px;color:#000;transform:scaleX(1.067);">bbs+++1[tp]</span>
<div style="left:16px;top:796px;width:1242px;height:20px;background:#ececec;border-bottom:1px solid #d8d8d8"></div>
<div style="left:101px;top:796px;width:1px;height:20px;background:#d8d8d8;"></div>
<div style="left:248px;top:796px;width:1px;height:20px;background:#d8d8d8;"></div>
<div style="left:315px;top:796px;width:1px;height:20px;background:#d8d8d8;"></div>
<div style="left:368px;top:796px;width:1px;height:20px;background:#d8d8d8;"></div>
<div style="left:433px;top:796px;width:1px;height:20px;background:#d8d8d8;"></div>
<div style="left:498px;top:796px;width:1px;height:20px;background:#d8d8d8;"></div>
<div style="left:565px;top:796px;width:1px;height:20px;background:#d8d8d8;"></div>
<div style="left:631px;top:796px;width:1px;height:20px;background:#d8d8d8;"></div>
<div style="left:778px;top:796px;width:1px;height:20px;background:#d8d8d8;"></div>
<div style="left:844px;top:796px;width:1px;height:20px;background:#d8d8d8;"></div>
<div style="left:910px;top:796px;width:1px;height:20px;background:#d8d8d8;"></div>
<div style="left:976px;top:796px;width:1px;height:20px;background:#d8d8d8;"></div>
<div style="left:1049px;top:796px;width:1px;height:20px;background:#d8d8d8;"></div>
<svg style="left:19px;top:797px" width="16" height="18" viewBox="0 0 16 18"><path d="M.500 1.500h7.500l3 3v9.500h-10.500z" fill="#fdfdfd" stroke="#5a5f6a"/><path d="M8 1.500v3h3" fill="none" stroke="#5a5f6a"/><circle cx="11" cy="12.500" r="3.200" fill="#ea5a2e" stroke="#9a2f12"/></svg>
<span class="t" style="left:37px;transform-origin:0 50%;top:798.5px;color:#000;transform:scaleX(0.899);">140178830</span>
<span class="t" style="right:1035.5px;transform-origin:100% 50%;top:798.5px;color:#000;transform:scaleX(0.899);">2017.01.02 14:25:08</span>
<span class="t" style="right:968.5px;transform-origin:100% 50%;top:798.5px;color:#000;transform:scaleX(0.944);">sell</span>
<span class="t" style="right:915.5px;transform-origin:100% 50%;top:798.5px;color:#000;transform:scaleX(0.899);">0.06</span>
<span class="t" style="right:850.5px;transform-origin:100% 50%;top:798.5px;color:#000;transform:scaleX(1.009);">cadjpy</span>
<span class="t" style="right:785.5px;transform-origin:100% 50%;top:798.5px;color:#000;transform:scaleX(0.899);">87.197</span>
<span class="t" style="right:718.5px;transform-origin:100% 50%;top:798.5px;color:#000;transform:scaleX(0.899);">0.000</span>
<span class="t" style="right:652.5px;transform-origin:100% 50%;top:798.5px;color:#000;transform:scaleX(0.899);">86.981</span>
<span class="t" style="right:505.5px;transform-origin:100% 50%;top:798.5px;color:#000;transform:scaleX(0.906);">2017.01.11 19:12:07</span>
<span class="t" style="right:439.5px;transform-origin:100% 50%;top:798.5px;color:#000;transform:scaleX(0.899);">87.201</span>
<span class="t" style="right:373.5px;transform-origin:100% 50%;top:798.5px;color:#000;transform:scaleX(0.951);">-0.60</span>
<span class="t" style="right:307.5px;transform-origin:100% 50%;top:798.5px;color:#000;transform:scaleX(0.951);">-1.80</span>
<span class="t" style="right:234.5px;transform-origin:100% 50%;top:798.5px;color:#000;transform:scaleX(0.951);">-0.21</span>
<span class="t" style="right:25.5px;transform-origin:100% 50%;top:798.5px;color:#000;transform:scaleX(0.899);">140150087</span>
<div style="left:16px;top:816px;width:1242px;height:20px;background:#fff;border-bottom:1px solid #d8d8d8"></div>
<div style="left:101px;top:816px;width:1px;height:20px;background:#d8d8d8;"></div>
<div style="left:248px;top:816px;width:1px;height:20px;background:#d8d8d8;"></div>
<div style="left:315px;top:816px;width:1px;height:20px;background:#d8d8d8;"></div>
<div style="left:368px;top:816px;width:1px;height:20px;background:#d8d8d8;"></div>
<div style="left:433px;top:816px;width:1px;height:20px;background:#d8d8d8;"></div>
<div style="left:498px;top:816px;width:1px;height:20px;background:#d8d8d8;"></div>
<div style="left:565px;top:816px;width:1px;height:20px;background:#d8d8d8;"></div>
<div style="left:631px;top:816px;width:1px;height:20px;background:#d8d8d8;"></div>
<div style="left:778px;top:816px;width:1px;height:20px;background:#d8d8d8;"></div>
<div style="left:844px;top:816px;width:1px;height:20px;background:#d8d8d8;"></div>
<div style="left:910px;top:816px;width:1px;height:20px;background:#d8d8d8;"></div>
<div style="left:976px;top:816px;width:1px;height:20px;background:#d8d8d8;"></div>
<div style="left:1049px;top:816px;width:1px;height:20px;background:#d8d8d8;"></div>
<div style="left:566px;top:816px;width:63px;height:19px;background:#60e460;"></div>
<svg style="left:19px;top:817px" width="16" height="18" viewBox="0 0 16 18"><path d="M.500 1.500h7.500l3 3v9.500h-10.500z" fill="#fdfdfd" stroke="#5a5f6a"/><path d="M8 1.500v3h3" fill="none" stroke="#5a5f6a"/><circle cx="11" cy="12.500" r="3.200" fill="#ea5a2e" stroke="#9a2f12"/></svg>
<span class="t" style="left:37px;transform-origin:0 50%;top:818.5px;color:#000;transform:scaleX(0.899);">141498233</span>
<span class="t" style="right:1035.5px;transform-origin:100% 50%;top:818.5px;color:#000;transform:scaleX(0.906);">2017.01.11 19:47:02</span>
<span class="t" style="right:968.5px;transform-origin:100% 50%;top:818.5px;color:#000;transform:scaleX(0.944);">sell</span>
<span class="t" style="right:915.5px;transform-origin:100% 50%;top:818.5px;color:#000;transform:scaleX(0.899);">0.02</span>
<span class="t" style="right:850.5px;transform-origin:100% 50%;top:818.5px;color:#000;transform:scaleX(1.053);">chfjpy</span>
<span class="t" style="right:785.5px;transform-origin:100% 50%;top:818.5px;color:#000;transform:scaleX(0.918);">113.546</span>
<span class="t" style="right:718.5px;transform-origin:100% 50%;top:818.5px;color:#000;transform:scaleX(0.899);">0.000</span>
<span class="t" style="right:652.5px;transform-origin:100% 50%;top:818.5px;color:#000;transform:scaleX(0.918);">113.204</span>
<span class="t" style="right:505.5px;transform-origin:100% 50%;top:818.5px;color:#000;transform:scaleX(0.899);">2017.01.12 04:29:27</span>
<span class="t" style="right:439.5px;transform-origin:100% 50%;top:818.5px;color:#000;transform:scaleX(0.918);">113.204</span>
<span class="t" style="right:373.5px;transform-origin:100% 50%;top:818.5px;color:#000;transform:scaleX(0.951);">-0.20</span>
<span class="t" style="right:307.5px;transform-origin:100% 50%;top:818.5px;color:#000;transform:scaleX(0.899);">0.06</span>
<span class="t" style="right:234.5px;transform-origin:100% 50%;top:818.5px;color:#000;transform:scaleX(0.899);">5.97</span>
<span class="t" style="right:25.5px;transform-origin:100% 50%;top:818.5px;color:#000;transform:scaleX(1.067);">bbs+++1[tp]</span>
<div style="left:16px;top:836px;width:1242px;height:20px;background:#ececec;border-bottom:1px solid #d8d8d8"></div>
<div style="left:101px;top:836px;width:1px;height:20px;background:#d8d8d8;"></div>
<div style="left:248px;top:836px;width:1px;height:20px;background:#d8d8d8;"></div>
<div style="left:315px;top:836px;width:1px;height:20px;background:#d8d8d8;"></div>
<div style="left:368px;top:836px;width:1px;height:20px;background:#d8d8d8;"></div>
<div style="left:433px;top:836px;width:1px;height:20px;background:#d8d8d8;"></div>
<div style="left:498px;top:836px;width:1px;height:20px;background:#d8d8d8;"></div>
<div style="left:565px;top:836px;width:1px;height:20px;background:#d8d8d8;"></div>
<div style="left:631px;top:836px;width:1px;height:20px;background:#d8d8d8;"></div>
<div style="left:778px;top:836px;width:1px;height:20px;background:#d8d8d8;"></div>
<div style="left:844px;top:836px;width:1px;height:20px;background:#d8d8d8;"></div>
<div style="left:910px;top:836px;width:1px;height:20px;background:#d8d8d8;"></div>
<div style="left:976px;top:836px;width:1px;height:20px;background:#d8d8d8;"></div>
<div style="left:1049px;top:836px;width:1px;height:20px;background:#d8d8d8;"></div>
<div style="left:566px;top:836px;width:63px;height:19px;background:#60e460;"></div>
<svg style="left:19px;top:837px" width="16" height="18" viewBox="0 0 16 18"><path d="M.500 1.500h7.500l3 3v9.500h-10.500z" fill="#fdfdfd" stroke="#5a5f6a"/><path d="M8 1.500v3h3" fill="none" stroke="#5a5f6a"/><circle cx="11" cy="12.500" r="3.200" fill="#2f9be8" stroke="#1c62a0"/></svg>
<span class="t" style="left:37px;transform-origin:0 50%;top:838.5px;color:#000;transform:scaleX(0.899);">141546064</span>
<span class="t" style="right:1035.5px;transform-origin:100% 50%;top:838.5px;color:#000;transform:scaleX(0.899);">2017.01.12 01:38:34</span>
<span class="t" style="right:968.5px;transform-origin:100% 50%;top:838.5px;color:#000;transform:scaleX(1.034);">buy</span>
<span class="t" style="right:915.5px;transform-origin:100% 50%;top:838.5px;color:#000;transform:scaleX(0.899);">0.06</span>
<span class="t" style="right:850.5px;transform-origin:100% 50%;top:838.5px;color:#000;transform:scaleX(1.016);">gbpusd</span>
<span class="t" style="right:785.5px;transform-origin:100% 50%;top:838.5px;color:#000;transform:scaleX(0.899);">1.21822</span>
<span class="t" style="right:718.5px;transform-origin:100% 50%;top:838.5px;color:#000;transform:scaleX(0.899);">0.00000</span>
<span class="t" style="right:652.5px;transform-origin:100% 50%;top:838.5px;color:#000;transform:scaleX(0.899);">1.22348</span>
<span class="t" style="right:505.5px;transform-origin:100% 50%;top:838.5px;color:#000;transform:scaleX(0.899);">2017.01.12 07:39:21</span>
<span class="t" style="right:439.5px;transform-origin:100% 50%;top:838.5px;color:#000;transform:scaleX(0.899);">1.22348</span>
<span class="t" style="right:373.5px;transform-origin:100% 50%;top:838.5px;color:#000;transform:scaleX(0.951);">-0.60</span>
<span class="t" style="right:307.5px;transform-origin:100% 50%;top:838.5px;color:#000;transform:scaleX(0.899);">0.00</span>
<span class="t" style="right:234.5px;transform-origin:100% 50%;top:838.5px;color:#000;transform:scaleX(0.899);">31.56</span>
<span class="t" style="right:25.5px;transform-origin:100% 50%;top:838.5px;color:#000;transform:scaleX(1.087);">bbb+++5[tp]</span>
<div style="left:16px;top:856px;width:1242px;height:20px;background:#fff;border-bottom:1px solid #d8d8d8"></div>
<div style="left:101px;top:856px;width:1px;height:20px;background:#d8d8d8;"></div>
<div style="left:248px;top:856px;width:1px;height:20px;background:#d8d8d8;"></div>
<div style="left:315px;top:856px;width:1px;height:20px;background:#d8d8d8;"></div>
<div style="left:368px;top:856px;width:1px;height:20px;background:#d8d8d8;"></div>
<div style="left:433px;top:856px;width:1px;height:20px;background:#d8d8d8;"></div>
<div style="left:498px;top:856px;width:1px;height:20px;background:#d8d8d8;"></div>
<div style="left:565px;top:856px;width:1px;height:20px;background:#d8d8d8;"></div>
<div style="left:631px;top:856px;width:1px;height:20px;background:#d8d8d8;"></div>
<div style="left:778px;top:856px;width:1px;height:20px;background:#d8d8d8;"></div>
<div style="left:844px;top:856px;width:1px;height:20px;background:#d8d8d8;"></div>
<div style="left:910px;top:856px;width:1px;height:20px;background:#d8d8d8;"></div>
<div style="left:976px;top:856px;width:1px;height:20px;background:#d8d8d8;"></div>
<div style="left:1049px;top:856px;width:1px;height:20px;background:#d8d8d8;"></div>
<div style="left:566px;top:856px;width:63px;height:19px;background:#60e460;"></div>
<svg style="left:19px;top:857px" width="16" height="18" viewBox="0 0 16 18"><path d="M.500 1.500h7.500l3 3v9.500h-10.500z" fill="#fdfdfd" stroke="#5a5f6a"/><path d="M8 1.500v3h3" fill="none" stroke="#5a5f6a"/><circle cx="11" cy="12.500" r="3.200" fill="#2f9be8" stroke="#1c62a0"/></svg>
<span class="t" style="left:37px;transform-origin:0 50%;top:858.5px;color:#000;transform:scaleX(0.899);">141475742</span>
<span class="t" style="right:1035.5px;transform-origin:100% 50%;top:858.5px;color:#000;transform:scaleX(0.906);">2017.01.11 19:17:20</span>
<span class="t" style="right:968.5px;transform-origin:100% 50%;top:858.5px;color:#000;transform:scaleX(1.034);">buy</span>
<span class="t" style="right:915.5px;transform-origin:100% 50%;top:858.5px;color:#000;transform:scaleX(0.899);">0.01</span>
<span class="t" style="right:850.5px;transform-origin:100% 50%;top:858.5px;color:#000;transform:scaleX(1.016);">gbpusd</span>
<span class="t" style="right:785.5px;transform-origin:100% 50%;top:858.5px;color:#000;transform:scaleX(0.899);">1.22317</span>
<span class="t" style="right:718.5px;transform-origin:100% 50%;top:858.5px;color:#000;transform:scaleX(0.899);">0.00000</span>
<span class="t" style="right:652.5px;transform-origin:100% 50%;top:858.5px;color:#000;transform:scaleX(0.899);">1.22780</span>
<span class="t" style="right:505.5px;transform-origin:100% 50%;top:858.5px;color:#000;transform:scaleX(0.899);">2017.01.12 09:10:32</span>
<span class="t" style="right:439.5px;transform-origin:100% 50%;top:858.5px;color:#000;transform:scaleX(0.899);">1.22794</span>
<span class="t" style="right:373.5px;transform-origin:100% 50%;top:858.5px;color:#000;transform:scaleX(0.951);">-0.10</span>
<span class="t" style="right:307.5px;transform-origin:100% 50%;top:858.5px;color:#000;transform:scaleX(0.951);">-0.08</span>
<span class="t" style="right:234.5px;transform-origin:100% 50%;top:858.5px;color:#000;transform:scaleX(0.899);">4.77</span>
<span class="t" style="right:25.5px;transform-origin:100% 50%;top:858.5px;color:#000;transform:scaleX(1.087);">bbb+++4[tp]</span>
<div style="left:16px;top:876px;width:1242px;height:20px;background:#ececec;border-bottom:1px solid #d8d8d8"></div>
<div style="left:101px;top:876px;width:1px;height:20px;background:#d8d8d8;"></div>
<div style="left:248px;top:876px;width:1px;height:20px;background:#d8d8d8;"></div>
<div style="left:315px;top:876px;width:1px;height:20px;background:#d8d8d8;"></div>
<div style="left:368px;top:876px;width:1px;height:20px;background:#d8d8d8;"></div>
<div style="left:433px;top:876px;width:1px;height:20px;background:#d8d8d8;"></div>
<div style="left:498px;top:876px;width:1px;height:20px;background:#d8d8d8;"></div>
<div style="left:565px;top:876px;width:1px;height:20px;background:#d8d8d8;"></div>
<div style="left:631px;top:876px;width:1px;height:20px;background:#d8d8d8;"></div>
<div style="left:778px;top:876px;width:1px;height:20px;background:#d8d8d8;"></div>
<div style="left:844px;top:876px;width:1px;height:20px;background:#d8d8d8;"></div>
<div style="left:910px;top:876px;width:1px;height:20px;background:#d8d8d8;"></div>
<div style="left:976px;top:876px;width:1px;height:20px;background:#d8d8d8;"></div>
<div style="left:1049px;top:876px;width:1px;height:20px;background:#d8d8d8;"></div>
<div style="left:566px;top:876px;width:63px;height:19px;background:#60e460;"></div>
<svg style="left:19px;top:877px" width="16" height="18" viewBox="0 0 16 18"><path d="M.500 1.500h7.500l3 3v9.500h-10.500z" fill="#fdfdfd" stroke="#5a5f6a"/><path d="M8 1.500v3h3" fill="none" stroke="#5a5f6a"/><circle cx="11" cy="12.500" r="3.200" fill="#2f9be8" stroke="#1c62a0"/></svg>
<span class="t" style="left:37px;transform-origin:0 50%;top:878.5px;color:#000;transform:scaleX(0.899);">141633214</span>
<span class="t" style="right:1035.5px;transform-origin:100% 50%;top:878.5px;color:#000;transform:scaleX(0.899);">2017.01.12 10:09:06</span>
<span class="t" style="right:968.5px;transform-origin:100% 50%;top:878.5px;color:#000;transform:scaleX(1.034);">buy</span>
<span class="t" style="right:915.5px;transform-origin:100% 50%;top:878.5px;color:#000;transform:scaleX(0.899);">0.02</span>
<span class="t" style="right:850.5px;transform-origin:100% 50%;top:878.5px;color:#000;transform:scaleX(0.981);">eurcad</span>
<span class="t" style="right:785.5px;transform-origin:100% 50%;top:878.5px;color:#000;transform:scaleX(0.899);">1.38938</span>
<span class="t" style="right:718.5px;transform-origin:100% 50%;top:878.5px;color:#000;transform:scaleX(0.899);">0.00000</span>
<span class="t" style="right:652.5px;transform-origin:100% 50%;top:878.5px;color:#000;transform:scaleX(0.899);">1.39257</span>
<span class="t" style="right:505.5px;transform-origin:100% 50%;top:878.5px;color:#000;transform:scaleX(0.899);">2017.01.12 13:08:24</span>
<span class="t" style="right:439.5px;transform-origin:100% 50%;top:878.5px;color:#000;transform:scaleX(0.899);">1.39257</span>
<span class="t" style="right:373.5px;transform-origin:100% 50%;top:878.5px;color:#000;transform:scaleX(0.951);">-0.20</span>
<span class="t" style="right:307.5px;transform-origin:100% 50%;top:878.5px;color:#000;transform:scaleX(0.899);">0.00</span>
<span class="t" style="right:234.5px;transform-origin:100% 50%;top:878.5px;color:#000;transform:scaleX(0.899);">4.88</span>
<span class="t" style="right:25.5px;transform-origin:100% 50%;top:878.5px;color:#000;transform:scaleX(1.087);">bbb+++1[tp]</span>
<div style="left:16px;top:896px;width:1242px;height:20px;background:#3399ff;border-bottom:1px solid #5eaeff"></div>
<div style="left:101px;top:896px;width:1px;height:20px;background:#5eaeff;"></div>
<div style="left:248px;top:896px;width:1px;height:20px;background:#5eaeff;"></div>
<div style="left:315px;top:896px;width:1px;height:20px;background:#5eaeff;"></div>
<div style="left:368px;top:896px;width:1px;height:20px;background:#5eaeff;"></div>
<div style="left:433px;top:896px;width:1px;height:20px;background:#5eaeff;"></div>
<div style="left:498px;top:896px;width:1px;height:20px;background:#5eaeff;"></div>
<div style="left:565px;top:896px;width:1px;height:20px;background:#5eaeff;"></div>
<div style="left:631px;top:896px;width:1px;height:20px;background:#5eaeff;"></div>
<div style="left:778px;top:896px;width:1px;height:20px;background:#5eaeff;"></div>
<div style="left:844px;top:896px;width:1px;height:20px;background:#5eaeff;"></div>
<div style="left:910px;top:896px;width:1px;height:20px;background:#5eaeff;"></div>
<div style="left:976px;top:896px;width:1px;height:20px;background:#5eaeff;"></div>
<div style="left:1049px;top:896px;width:1px;height:20px;background:#5eaeff;"></div>
<div style="left:566px;top:896px;width:63px;height:19px;background:#60e460;"></div>
<svg style="left:19px;top:897px" width="16" height="18" viewBox="0 0 16 18"><path d="M.500 1.500h7.500l3 3v9.500h-10.500z" fill="#fdfdfd" stroke="#5a5f6a"/><path d="M8 1.500v3h3" fill="none" stroke="#5a5f6a"/><circle cx="11" cy="12.500" r="3.200" fill="#2f9be8" stroke="#1c62a0"/></svg>
<span class="t" style="left:37px;transform-origin:0 50%;top:898.5px;color:#fff;transform:scaleX(0.899);">138755958</span>
<span class="t" style="right:1035.5px;transform-origin:100% 50%;top:898.5px;color:#fff;transform:scaleX(0.899);">2016.12.16 02:02:30</span>
<span class="t" style="right:968.5px;transform-origin:100% 50%;top:898.5px;color:#fff;transform:scaleX(1.034);">buy</span>
<span class="t" style="right:915.5px;transform-origin:100% 50%;top:898.5px;color:#fff;transform:scaleX(0.899);">0.01</span>
<span class="t" style="right:850.5px;transform-origin:100% 50%;top:898.5px;color:#fff;transform:scaleX(0.991);">audcad</span>
<span class="t" style="right:785.5px;transform-origin:100% 50%;top:898.5px;color:#fff;transform:scaleX(0.899);">0.98044</span>
<span class="t" style="right:718.5px;transform-origin:100% 50%;top:898.5px;color:#fff;transform:scaleX(0.899);">0.00000</span>
<span class="t" style="right:652.5px;transform-origin:100% 50%;top:898.5px;color:#000;transform:scaleX(0.899);">0.98291</span>
<span class="t" style="right:505.5px;transform-origin:100% 50%;top:898.5px;color:#fff;transform:scaleX(0.899);">2017.01.12 14:24:46</span>
<span class="t" style="right:439.5px;transform-origin:100% 50%;top:898.5px;color:#fff;transform:scaleX(0.899);">0.98291</span>
<span class="t" style="right:373.5px;transform-origin:100% 50%;top:898.5px;color:#fff;transform:scaleX(0.951);">-0.10</span>
<span class="t" style="right:307.5px;transform-origin:100% 50%;top:898.5px;color:#fff;transform:scaleX(0.899);">0.50</span>
<span class="t" style="right:234.5px;transform-origin:100% 50%;top:898.5px;color:#fff;transform:scaleX(0.899);">1.89</span>
<span class="t" style="right:25.5px;transform-origin:100% 50%;top:898.5px;color:#fff;transform:scaleX(1.087);">bbb+++2[tp]</span>
<div style="left:16px;top:916px;width:1242px;height:19px;background:#cdcdcd;"></div>
<div style="left:22px;top:921px;width:9px;height:9px;background:#e6e6e6;border:1px solid #8a8a8a;border-radius:5px"></div>
<div style="left:25px;top:924px;width:3px;height:3px;background:#aaa;border-radius:2px"></div>
<span class="t" style="left:38px;transform-origin:0 50%;top:918px;font-weight:bold;transform:scaleX(0.985);">Прибыль: 265.99</span>
<span class="t" style="left:143.5px;transform-origin:0 50%;top:918px;font-weight:bold;transform:scaleX(0.995);">Кредит: 0.00</span>
<span class="t" style="left:221.5px;transform-origin:0 50%;top:918px;font-weight:bold;transform:scaleX(0.991);">Депозит: 0.00</span>
<span class="t" style="left:306px;transform-origin:0 50%;top:918px;font-weight:bold;transform:scaleX(0.972);">Снятие: 0.00</span>
<span class="t" style="right:234.5px;transform-origin:100% 50%;top:918px;font-weight:bold;transform:scaleX(1.035);">265.99</span>
<div style="left:1259px;top:711px;width:17px;height:224px;background:#f5f5f5;"></div>
<svg style="left:1263.5px;top:717px" width="8" height="5" viewBox="0 0 8 5"><path d="M.500 4.500L4 .800 7.500 4.500z" fill="#505050"/></svg>
<svg style="left:1263.5px;top:925px" width="8" height="5" viewBox="0 0 8 5"><path d="M.500 .500L4 4.200 7.500 .500z" fill="#505050"/></svg>
<div style="left:1260px;top:899px;width:15px;height:17px;background:linear-gradient(90deg,#f5f5f5,#e6e6e6 45%,#d6d6d6 50%,#dcdcdc);border:1px solid #8e8e8e;border-radius:2px"></div>
<div style="left:1264px;top:904px;width:7px;height:1px;background:#5a5a5a;"></div>
<div style="left:1264px;top:906px;width:7px;height:1px;background:#5a5a5a;"></div>
<div style="left:1264px;top:908px;width:7px;height:1px;background:#5a5a5a;"></div>
<div style="left:1264px;top:910px;width:7px;height:1px;background:#5a5a5a;"></div>
<div style="left:16px;top:935px;width:1260px;height:1px;background:#111;"></div>
<div style="left:151px;top:935px;width:101px;height:21px;background:#fff;border:1px solid #111;border-top:none;border-bottom-width:2px;border-right-width:2px"></div>
<span class="t" style="left:28.5px;transform-origin:0 50%;top:938.5px;color:#6f6f6f;transform:scaleX(1.027);">Торговля</span>
<span class="t" style="left:100.5px;transform-origin:0 50%;top:938.5px;color:#6f6f6f;transform:scaleX(1.022);">Активы</span>
<span class="t" style="left:161px;transform-origin:0 50%;top:938.5px;transform:scaleX(0.988);">История Счета</span>
<span class="t" style="left:263px;transform-origin:0 50%;top:938.5px;color:#6f6f6f;transform:scaleX(1.012);">Новости</span>
<span class="t" style="left:342px;transform-origin:0 50%;top:938.5px;color:#6f6f6f;transform:scaleX(0.995);">Алерты</span>
<span class="t" style="left:404px;transform-origin:0 50%;top:938.5px;color:#6f6f6f;transform:scaleX(1.020);">Почта</span>
<span class="t" style="left:458px;transform-origin:0 50%;top:938.5px;color:#6f6f6f;transform:scaleX(1.034);">Маркет</span>
<span class="t" style="left:519px;transform-origin:0 50%;top:938.5px;color:#6f6f6f;transform:scaleX(1.007);">Сигналы</span>
<span class="t" style="left:588px;transform-origin:0 50%;top:938.5px;color:#6f6f6f;">Библиотека</span>
<span class="t" style="left:673px;transform-origin:0 50%;top:938.5px;color:#6f6f6f;transform:scaleX(0.987);">Эксперты</span>
<span class="t" style="left:745px;transform-origin:0 50%;top:938.5px;color:#6f6f6f;transform:scaleX(1.028);">Журнал</span>
<div style="left:90px;top:940px;width:1px;height:12px;background:#555;"></div>
<div style="left:332px;top:940px;width:1px;height:12px;background:#555;"></div>
<div style="left:394px;top:940px;width:1px;height:12px;background:#555;"></div>
<div style="left:448px;top:940px;width:1px;height:12px;background:#555;"></div>
<div style="left:508px;top:940px;width:1px;height:12px;background:#555;"></div>
<div style="left:578px;top:940px;width:1px;height:12px;background:#555;"></div>
<div style="left:662px;top:940px;width:1px;height:12px;background:#555;"></div>
<div style="left:735px;top:940px;width:1px;height:12px;background:#555;"></div>
<div style="left:799px;top:940px;width:1px;height:12px;background:#555;"></div>
<span class="t" style="left:312px;transform-origin:0 50%;top:943px;font-size:9px;color:#d42020;font-weight:bold;transform:scaleX(0.950);">99</span>
<div style="left:493px;top:716px;width:224px;height:35px;background:linear-gradient(#fff,#e9ecf4);border:1px solid #767676;border-radius:3px;box-shadow:2px 2px 2px rgba(0,0,0,.3)"></div>
<span class="t" style="left:498px;transform-origin:0 50%;top:719px;color:#575757;transform:scaleX(0.922);">Swiss Frank vs Japanese Yen</span>
<span class="t" style="left:498px;transform-origin:0 50%;top:734px;color:#575757;transform:scaleX(0.948);">77896 баров, последняя цена 113.40500</span>
<div style="left:0px;top:960px;width:1280px;height:1px;background:#a0a0a0;"></div>
<div style="left:0px;top:961px;width:1280px;height:23px;background:#f0f0f0;"></div>
<span class="t" style="left:2.5px;transform-origin:0 50%;top:967px;transform:scaleX(0.970);">Для вызова справки нажмите F1</span>
<span class="t" style="left:592px;transform-origin:0 50%;top:967px;">Default</span>
<div style="left:586px;top:964px;width:1px;height:18px;background:#c4c4c4;"></div>
<div style="left:702px;top:964px;width:1px;height:18px;background:#c4c4c4;"></div>
<div style="left:804px;top:964px;width:1px;height:18px;background:#c4c4c4;"></div>
<div style="left:875px;top:964px;width:1px;height:18px;background:#c4c4c4;"></div>
<div style="left:946px;top:964px;width:1px;height:18px;background:#c4c4c4;"></div>
<div style="left:1014px;top:964px;width:1px;height:18px;background:#c4c4c4;"></div>
<div style="left:1084px;top:964px;width:1px;height:18px;background:#c4c4c4;"></div>
<div style="left:1150px;top:964px;width:1px;height:18px;background:#c4c4c4;"></div>
<div style="left:1156px;top:967px;width:2px;height:11px;background:#5c7c1c;"></div>
<div style="left:1156px;top:978px;width:2px;height:2px;background:#123f80;"></div>
<div style="left:1159px;top:967px;width:2px;height:10px;background:#5c7c1c;"></div>
<div style="left:1159px;top:977px;width:2px;height:3px;background:#123f80;"></div>
<div style="left:1162px;top:967px;width:2px;height:8px;background:#5c7c1c;"></div>
<div style="left:1162px;top:975px;width:2px;height:5px;background:#123f80;"></div>
<div style="left:1165px;top:967px;width:2px;height:7px;background:#5c7c1c;"></div>
<div style="left:1165px;top:974px;width:2px;height:6px;background:#123f80;"></div>
<div style="left:1168px;top:967px;width:2px;height:5px;background:#5c7c1c;"></div>
<div style="left:1168px;top:972px;width:2px;height:8px;background:#123f80;"></div>
<div style="left:1171px;top:967px;width:2px;height:4px;background:#5c7c1c;"></div>
<div style="left:1171px;top:971px;width:2px;height:9px;background:#123f80;"></div>
<div style="left:1174px;top:967px;width:2px;height:3px;background:#5c7c1c;"></div>
<div style="left:1174px;top:970px;width:2px;height:10px;background:#123f80;"></div>
<div style="left:1177px;top:967px;width:2px;height:1px;background:#5c7c1c;"></div>
<div style="left:1177px;top:968px;width:2px;height:12px;background:#123f80;"></div>
<span class="t" style="left:1182.5px;transform-origin:0 50%;top:967px;transform:scaleX(0.980);">111479/56 kb</span>
<div style="left:0px;top:984px;width:1280px;height:40px;background:linear-gradient(rgba(255,255,255,.22),rgba(255,255,255,.04) 45%,rgba(0,0,20,.03)),linear-gradient(90deg,#8ba6c7 0%,#9cb5d3 4%,#a5bcd9 14%,#a9c0dc 50%,#a3bad7 70%,#8ea8c9 80%,#7f9bbe 86%,#7995b9 100%);border-top:1px solid #52688a"></div>
<div style="left:9px;top:986px;width:37px;height:37px;background:radial-gradient(circle at 50% 85%,#5cc4ee,#2a86c4 40%,#1a5a9c 65%,#143c74);border:1px solid #16365f;border-radius:19px;box-shadow:0 0 2px #1a3a6a"></div>
<div style="left:12px;top:988px;width:31px;height:16px;background:linear-gradient(rgba(255,255,255,.45),rgba(255,255,255,.05));border-radius:16px 16px 8px 8px/14px 14px 4px 4px"></div>
<div style="left:18px;top:996px;width:9px;height:8px;background:#ee5a2a;border-radius:3px 0 0 0;transform:skewY(-10deg)"></div>
<div style="left:29px;top:995px;width:9px;height:8px;background:#86c83e;border-radius:0 3px 0 0;transform:skewY(10deg)"></div>
<div style="left:18px;top:1006px;width:9px;height:8px;background:#3aa0ea;border-radius:0 0 0 3px;transform:skewY(10deg)"></div>
<div style="left:29px;top:1007px;width:9px;height:8px;background:#fbc93a;border-radius:0 0 3px 0;transform:skewY(-10deg)"></div>
<svg style="left:72px;top:986px" width="34" height="34" viewBox="0 0 34 34"><path d="M12 3h18v17H12z" fill="#dfe9f6" stroke="#8aa0c0"/><path d="M13.500 4.500h15v13h-15z" fill="#2f5fb8"/><path d="M15 26h12l2 4H13z" fill="#cfd9e6" stroke="#9ab" stroke-width=".6"/><path d="M3 9h22v10H3z" fill="#3f88de" stroke="#e8f0fa" stroke-width="1" transform="skewX(-8)"/><path d="M5 11h18M5 13.500h18M5 16h18" stroke="#dcebfb" stroke-width="1.400" stroke-dasharray="2 1" transform="skewX(-8)"/></svg>
<div style="left:121px;top:985px;width:60px;height:39px;background:linear-gradient(#f4f8fd,#dbe6f4 50%,#c9d9ee);border:1px solid #7d93b2;border-radius:3px;box-shadow:inset 0 0 0 1px rgba(255,255,255,.8)"></div>
<svg style="left:135px;top:988px" width="32" height="32" viewBox="0 0 32 32"><rect x="0" y="0" width="21" height="16" fill="#161a16"/><rect x="7.500" y="6.300" width="11" height="3" fill="#f4f4f8"/><rect x="15.500" y="9.300" width="6" height="6.700" fill="#161a16"/><path d="M22.500 0h7.500L21.500 13h-6z" fill="#6abf3a" stroke="#f2f6ee" stroke-width="1.200"/><path d="M16 10.500h16v5.500H16z" fill="#62b535"/><path d="M26 10.500h6v14h-6z" fill="#62b535"/><rect x="0" y="16" width="17" height="16" fill="#161a16"/><path d="M2.500 16.500L16 32M16 16.500L2.500 32" stroke="#eef4e8" stroke-width="7.500"/><path d="M2.500 16.500L16 32M16 16.500L2.500 32" stroke="#66bb36" stroke-width="5"/><path d="M29.500 20.500a6 6.200 0 1 0 .5 8.500" fill="none" stroke="#16181c" stroke-width="4.600"/></svg>
<span class="t" style="left:1063px;transform-origin:0 50%;top:995.5px;color:#fff;transform:scaleX(0.900);text-shadow:0 0 2px #3a4f6a;">EN</span>
<div style="left:1094px;top:996px;width:17px;height:16px;background:#2c3a22;border:1px solid #1e2a1a;border-radius:1px"></div>
<svg style="left:1095px;top:997px" width="15" height="14" viewBox="0 0 15 14"><path d="M2 7c2-4 8-5 11-2-1 4-6 6-9 4 1-3 4-4 6-3-1 2-3 2-4 1" fill="none" stroke="#76b900" stroke-width="1.600"/></svg>
<div style="left:1117px;top:996px;width:18px;height:18px;background:#f49c20;border:1px solid #c87400;border-radius:9px"></div>
<div style="left:1122px;top:1001px;width:8px;height:8px;border:2px solid #fff;border-radius:4px"></div>
<svg style="left:1142px;top:994px" width="18" height="20" viewBox="0 0 18 20"><rect x="5" y="5.500" width="11" height="9" fill="#8794a8" stroke="#fff" stroke-width="1.600"/><path d="M7 18h8M11 15v3" stroke="#fff" stroke-width="1.600"/><path d="M2 1.500v4M5 1.500v4M1 5.500h5v3l-2.500 2" stroke="#fff" stroke-width="1.300" fill="none"/></svg>
<svg style="left:1165px;top:998px" width="20" height="14" viewBox="0 0 20 14"><path d="M1 5h3l4-4v12l-4-4H1z" fill="#fff" stroke="#555" stroke-width=".8"/><path d="M10.500 4.500c1.500 1.500 1.500 3.500 0 5M12.500 2.500c3 3 3 6 0 9" fill="none" stroke="#fff" stroke-width="1.200"/></svg>
<span class="t" style="left:1213px;transform-origin:0 50%;top:990px;color:#fff;transform:scaleX(0.899);text-shadow:0 0 2px #3a4f6a;">16:29</span>
<span class="t" style="left:1199px;transform-origin:0 50%;top:1007px;color:#fff;transform:scaleX(0.899);text-shadow:0 0 2px #3a4f6a;">12.01.2017</span>
<div style="left:1265px;top:985px;width:15px;height:39px;background:linear-gradient(90deg,#5f7797,#7a92b3 30%,#6b84a6);border-left:1px solid #3f5676;box-shadow:inset 1px 0 0 #9fb5d2"></div>
</body></html>
